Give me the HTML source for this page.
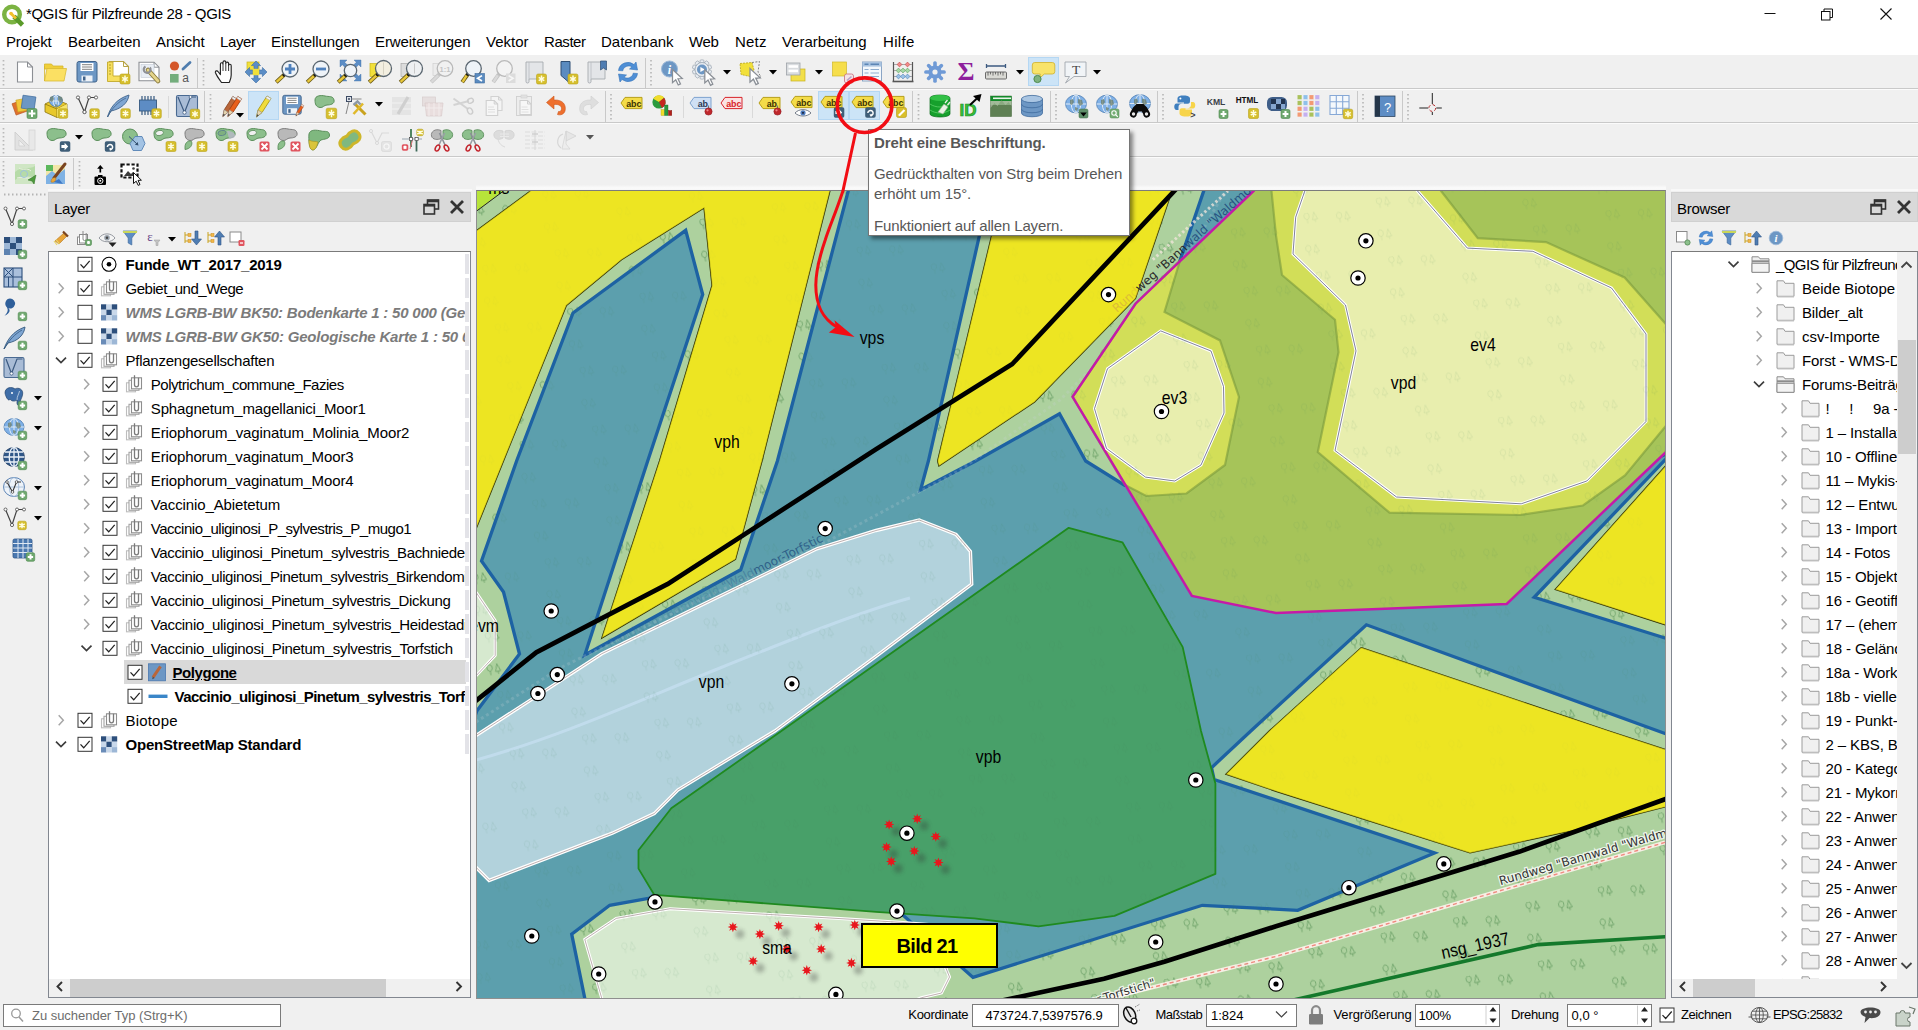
<!DOCTYPE html>
<html lang="de"><head><meta charset="utf-8"><title>QGIS für Pilzfreunde 28 - QGIS</title>
<style>
*{box-sizing:border-box;margin:0;padding:0}
html,body{width:1918px;height:1030px;overflow:hidden;background:#f0f0f0;font-family:"Liberation Sans",sans-serif;font-size:15px;color:#000}
.abs{position:absolute}
#title{left:0;top:0;width:1918px;height:30px;background:#fff}
#title .t{left:26px;top:5px;font-size:15px;white-space:nowrap}
#menu{left:0;top:30px;width:1918px;height:25px;background:#fff}
#menu span{position:absolute;top:3px;font-size:15px;white-space:nowrap}
.hl{background:#cce4f7;border:1px solid #b5d7f3}
.sep{background:#c9c9c9}
.panelhead{background:#d9d9d9;height:30px;font-size:15px;padding:7px 0 0 5px;border:1px solid #d0d0d0}
.tree{background:#fff;border:1px solid #828790;border-top-color:#7a7a7a;overflow:hidden}
.row{position:absolute;left:0;height:24px;line-height:26px;white-space:nowrap;font-size:15px}
.b{font-weight:bold}
.gi{font-weight:bold;font-style:italic;color:#7b7b7b}
.stat{position:absolute;top:1007px;font-size:13px;white-space:nowrap;line-height:16px}
.inp{position:absolute;background:#fff;border:1px solid #7a7a7a;height:23px;top:1004px;font-size:13px;line-height:21px;white-space:nowrap;overflow:hidden}
svg text{font-family:"DejaVu Sans","Liberation Sans",sans-serif}
</style></head><body>
<div id="title" class="abs"><span class="abs t" style="letter-spacing:-0.354px">*QGIS für Pilzfreunde 28 - QGIS</span></div>
<div id="menu" class="abs">
<span style="left:6px;letter-spacing:-0.155px">Projekt</span>
<span style="left:68px;letter-spacing:0.004px">Bearbeiten</span>
<span style="left:156px;letter-spacing:-0.084px">Ansicht</span>
<span style="left:220px;letter-spacing:-0.386px">Layer</span>
<span style="left:271px;letter-spacing:-0.113px">Einstellungen</span>
<span style="left:375px;letter-spacing:-0.087px">Erweiterungen</span>
<span style="left:486px;letter-spacing:0.011px">Vektor</span>
<span style="left:544px;letter-spacing:-0.431px">Raster</span>
<span style="left:601px;letter-spacing:0.004px">Datenbank</span>
<span style="left:689px;letter-spacing:-0.326px">Web</span>
<span style="left:735px;letter-spacing:0.189px">Netz</span>
<span style="left:782px;letter-spacing:-0.040px">Verarbeitung</span>
<span style="left:883px;letter-spacing:0.320px">Hilfe</span>
</div>
<div class="abs sep" style="left:0;top:88px;width:1918px;height:1px"></div>
<div class="abs sep" style="left:0;top:122px;width:1918px;height:1px"></div>
<div class="abs sep" style="left:0;top:156px;width:1918px;height:1px"></div>
<div class="abs" style="left:0;top:89px;width:1918px;height:1px;background:#fbfbfb"></div>
<div class="abs" style="left:0;top:123px;width:1918px;height:1px;background:#fbfbfb"></div>
<div class="abs" style="left:0;top:157px;width:1918px;height:1px;background:#fbfbfb"></div>
<div class="abs hl" style="left:1028px;top:57px;width:31px;height:29px"></div>
<div class="abs hl" style="left:248px;top:91px;width:31px;height:29px"></div>
<div class="abs hl" style="left:818px;top:91px;width:31px;height:29px"></div>
<div class="abs hl" style="left:849px;top:91px;width:31px;height:29px"></div>
<svg class="abs" style="left:476px;top:191px" width="1190" height="807" viewBox="476 191 1190 807">
<defs><filter id="sh" x="-50%" y="-50%" width="250%" height="250%"><feGaussianBlur stdDeviation="2.2"/></filter><g id="trp" fill="none" stroke-width="1"><path d="M-3,-1.500 a2.600,3.300 0 1,1 .1,0 M-3,-1.500 v4 M2.200,0 l2.600,-7.500 l2.600,7.500z M4.800,0 v2.800"/></g><pattern id="tr" width="74" height="60" patternUnits="userSpaceOnUse" patternTransform="rotate(-12)"><g stroke="#3c7a50" stroke-opacity=".09"><use href="#trp" x="10" y="14"/><use href="#trp" x="47" y="40"/><use href="#trp" x="52" y="8"/></g></pattern><pattern id="tr2" width="74" height="60" patternUnits="userSpaceOnUse" patternTransform="rotate(-12)"><g stroke="#6fa267" stroke-opacity=".75"><use href="#trp" x="10" y="14"/><use href="#trp" x="47" y="40"/><use href="#trp" x="52" y="8"/></g></pattern></defs>
<rect x="476" y="191" width="1190" height="807" fill="#add19e"/>
<rect x="476" y="191" width="1190" height="807" fill="url(#tr2)"/>
<path d="M1665,842.4 L1276,956.4 L1090,1003" stroke="#f6efe4" stroke-width="4" fill="none"/>
<path d="M1665,842.4 L1276,956.4 L1090,1003" stroke="#f08a80" stroke-width="1.4" stroke-dasharray="4,3" fill="none"/>
<polygon points="470.0,185.0 512.0,185.0 503.5,191.0 476.0,211.5 470.0,215.5" fill="#b7e43a" stroke="#222" stroke-width="1"/>
<polygon points="470.0,1005.0 470.0,730.0 476.8,711.0 519.5,654.0 503.5,592.0 481.5,561.0 516.6,461.0 573.0,313.0 685.7,230.3 702.7,294.5 647.7,461.0 584.8,655.0 740.7,569.8 777.4,461.0 848.2,191.0 850.0,183.0 992.0,183.0 989.5,191.0 928.4,461.0 920.6,489.8 975.6,461.0 1059.5,413.8 1085.7,461.0 1123.7,484.6 1150.0,400.0 1180.0,260.5 1203.7,191.0 1206.0,183.0 1262.0,183.0 1400.0,400.0 1600.0,480.0 1672.0,452.0 1665.0,460.0 1534.2,597.3 1665.0,638.0 1672.0,640.0 1672.0,736.0 1665.0,733.5 1366.4,624.8 1250.8,731.0 1211.5,767.7 1214.1,779.5 1434.6,852.9 1297.7,910.3 1202.3,905.3 973.0,977.4 902.2,914.5 896.0,906.0 656.0,891.0 654.2,897.4 609.7,905.3 571.7,934.1 584.8,998.4 586.5,1006.0" fill="#5c9fad" stroke="#1d62a3" stroke-width="3.3" stroke-linejoin="miter"/>
<path d="M476,722 L560,668 L700,600 L830,540 L960,470 L1060,400 L1130,330 L1200,235 L1225,191" stroke="#c9d3d6" stroke-opacity=".22" stroke-width="3" stroke-dasharray="3,3" fill="none"/>
<polygon points="470.0,235.5 476.0,231.0 529.7,191.5 540.0,183.0 832.0,183.0 829.9,191.0 762.0,461.0 735.5,559.3 601.8,638.0 659.5,461.0 712.0,285.4 704.0,208.0 621.5,259.7 566.4,305.5 503.5,461.0 476.0,529.0 470.0,543.0" fill="#ede522" stroke="#2a2a00" stroke-width="1.25"/>
<polygon points="1004.0,183.0 1002.0,191.0 991.3,236.9 937.6,461.0 938.9,466.0 1034.6,402.0 1135.5,298.5 1172.0,191.0 1175.0,183.0" fill="#ede522" stroke="#2a2a00" stroke-width="1.25"/>
<polygon points="1672.0,459.0 1665.3,466.2 1555.2,589.4 1665.3,624.8 1672.0,627.0" fill="#ede522" stroke="#2a2a00" stroke-width="1.25"/>
<polygon points="1361.2,647.6 1609.0,731.0 1665.0,749.3 1672.0,751.5 1672.0,805.0 1665.0,807.0 1572.2,830.6 1470.0,852.9 1276.0,791.3 1225.9,774.2 1269.2,731.0" fill="#ede522" stroke="#2a2a00" stroke-width="1.25"/>
<polygon points="1262.0,183.0 1253.5,191.0 1135.5,303.7 1072.6,396.8 1191.9,596.0 1276.0,613.0 1506.7,603.9 1665.0,453.0 1675.0,443.0 1675.0,183.0" fill="#a6c459"/>
<polygon points="1124.5,484.6 1072.6,396.8 1135.5,303.7 1180.0,260.5 1164.5,312.0 1220.0,340.4 1239.0,397.0 1225.0,465.0 1186.5,493.5 1146.3,496.0" fill="#d2de58" stroke="#7a9a3c" stroke-width="2.2" stroke-opacity=".6"/>
<polygon points="1270.0,183.0 1271.5,191.0 1276.0,235.6 1282.0,275.0 1335.0,319.7 1338.5,352.2 1317.8,452.0 1389.5,512.7 1520.0,515.0 1583.0,505.5 1625.0,475.5 1665.0,427.0 1672.0,418.0 1672.0,331.0 1664.0,322.0 1624.6,277.5 1546.0,242.1 1477.8,238.2 1441.1,191.0 1435.0,183.0" fill="#d2de58" stroke="#7a9a3c" stroke-width="2.2" stroke-opacity=".6"/>
<polygon points="1262.0,183.0 1253.5,191.0 1135.5,303.7 1072.6,396.8 1191.9,596.0 1276.0,613.0 1506.7,603.9 1665.0,453.0 1675.0,443.0 1675.0,183.0" fill="none" stroke="#c51aa8" stroke-width="2.5"/>
<polygon points="1160.7,330.9 1211.0,351.0 1223.5,386.5 1224.0,413.0 1201.0,465.0 1174.8,481.0 1145.5,477.1 1106.5,448.5 1094.5,408.6 1107.5,368.7" fill="#e8eeae" stroke="#fff" stroke-width="3"/>
<polygon points="1160.7,330.9 1211.0,351.0 1223.5,386.5 1224.0,413.0 1201.0,465.0 1174.8,481.0 1145.5,477.1 1106.5,448.5 1094.5,408.6 1107.5,368.7" fill="none" stroke="#4a4a70" stroke-width=".7"/>
<polygon points="1306.5,183.0 1304.8,191.0 1295.7,217.2 1293.0,253.9 1345.5,305.0 1356.0,350.9 1335.0,450.5 1396.5,497.0 1521.2,503.8 1586.8,481.0 1646.0,421.5 1646.0,334.0 1611.5,288.0 1532.9,251.3 1467.3,248.1 1417.5,191.0 1411.0,183.0" fill="#e8eeae" stroke="#fff" stroke-width="3"/>
<polygon points="1306.5,183.0 1304.8,191.0 1295.7,217.2 1293.0,253.9 1345.5,305.0 1356.0,350.9 1335.0,450.5 1396.5,497.0 1521.2,503.8 1586.8,481.0 1646.0,421.5 1646.0,334.0 1611.5,288.0 1532.9,251.3 1467.3,248.1 1417.5,191.0 1411.0,183.0" fill="none" stroke="#4a4a70" stroke-width=".7"/>
<polygon points="470.0,739.0 476.0,735.5 601.8,653.7 816.8,548.8 876.0,530.5 919.2,520.0 956.0,534.4 970.4,551.4 971.7,584.2 876.0,656.3 774.8,731.0 677.8,790.0 654.2,813.6 612.3,833.2 489.1,880.4 476.0,867.3 470.0,861.0" fill="#b2d2dc" stroke="#fff" stroke-width="3.4"/>
<polygon points="470.0,739.0 476.0,735.5 601.8,653.7 816.8,548.8 876.0,530.5 919.2,520.0 956.0,534.4 970.4,551.4 971.7,584.2 876.0,656.3 774.8,731.0 677.8,790.0 654.2,813.6 612.3,833.2 489.1,880.4 476.0,867.3 470.0,861.0" fill="none" stroke="#8a7070" stroke-width=".55"/>
<path d="M476,760 C560,737 640,700 720,668 S860,612 910,598" stroke="#c4def0" stroke-width="3" fill="none" opacity=".8"/>
<polygon points="1068.7,527.8 1122.4,542.3 1182.7,647.1 1201.0,731.0 1215.4,783.4 1215.4,873.9 1114.5,915.8 1038.5,926.3 974.3,918.4 876.0,911.9 654.2,894.8 638.5,868.6 638.5,850.3 671.3,808.3 781.4,731.0 876.0,664.1" fill="#48a069" stroke="#1f8a1f" stroke-width="1.8" stroke-linejoin="round"/>
<polygon points="670.0,908.7 840.0,918.6 900.0,922.3 962.0,927.0 945.5,967.0 949.5,977.0 941.5,993.0 921.3,997.8 900.0,1006.0 604.0,1006.0 601.8,998.4 584.8,939.4 616.2,918.4" fill="#d6e9cf" stroke="#fff" stroke-width="3"/>
<polygon points="670.0,908.7 840.0,918.6 900.0,922.3 962.0,927.0 945.5,967.0 949.5,977.0 941.5,993.0 921.3,997.8 900.0,1006.0 604.0,1006.0 601.8,998.4 584.8,939.4 616.2,918.4" fill="none" stroke="#8a7070" stroke-width=".55"/>
<polygon points="470.0,584.0 476.8,593.4 495.2,620.6 495.2,655.5 476.8,675.0 470.0,682.0" fill="#d6e9cf" stroke="#fff" stroke-width="3"/>
<polygon points="470.0,584.0 476.8,593.4 495.2,620.6 495.2,655.5 476.8,675.0 470.0,682.0" fill="none" stroke="#8a7070" stroke-width=".55"/>
<rect x="476" y="191" width="1190" height="807" fill="url(#tr)"/>
<polygon points="470.0,235.5 476.0,231.0 529.7,191.5 540.0,183.0 832.0,183.0 829.9,191.0 762.0,461.0 735.5,559.3 601.8,638.0 659.5,461.0 712.0,285.4 704.0,208.0 621.5,259.7 566.4,305.5 503.5,461.0 476.0,529.0 470.0,543.0" fill="#ede522" fill-opacity=".72"/>
<polygon points="1004.0,183.0 1002.0,191.0 991.3,236.9 937.6,461.0 938.9,466.0 1034.6,402.0 1135.5,298.5 1172.0,191.0 1175.0,183.0" fill="#ede522" fill-opacity=".72"/>
<polygon points="1672.0,459.0 1665.3,466.2 1555.2,589.4 1665.3,624.8 1672.0,627.0" fill="#ede522" fill-opacity=".72"/>
<polygon points="1361.2,647.6 1609.0,731.0 1665.0,749.3 1672.0,751.5 1672.0,805.0 1665.0,807.0 1572.2,830.6 1470.0,852.9 1276.0,791.3 1225.9,774.2 1269.2,731.0" fill="#ede522" fill-opacity=".72"/>
<text x="1622" y="861" font-size="12" fill="#333" stroke="#fff" stroke-width="2.5" paint-order="stroke" stroke-opacity=".8" text-anchor="middle" transform="rotate(-16.3 1583 857)">Rundweg "Bannwald "Waldmoor-Torfstich"</text>
<text x="1156" y="986" font-size="11.5" fill="#333" stroke="#fff" stroke-width="2.5" paint-order="stroke" stroke-opacity=".8" text-anchor="end" transform="rotate(-17 1156 986)">Rundweg "Bannwald "Waldmoor-Torfstich"</text>
<path d="M1152.8,259.7 L1191.2,224.5 L1228,191" stroke="#f3e6dc" stroke-width="3" stroke-dasharray="2.5,2.5" fill="none" opacity=".75"/>
<text x="1117" y="313" font-size="12" text-anchor="start" transform="rotate(-42 1117 313)"><tspan fill="#d8b23c" fill-opacity=".8">Run</tspan><tspan fill="#d8b23c" fill-opacity=".35">d</tspan><tspan fill="#2b2b2b">weg "Bann</tspan><tspan fill="#1f4a7c" fill-opacity=".9">wald "Waldmoor</tspan></text>
<text x="824" y="541" font-size="12" text-anchor="end" transform="rotate(-26.5 824 541)"><tspan fill="#2a5a8a" fill-opacity=".22">Rundweg "Bannwald </tspan><tspan fill="#2a5a8a" fill-opacity=".4">"Wald</tspan><tspan fill="#245080" fill-opacity=".8">moor-Torfstic</tspan></text>
<path d="M1178,187 L1012.3,364 L876,449.2 L667.4,584.2 L536.3,652.3 L470,705.5" fill="none" stroke="#000" stroke-width="4.7" stroke-linejoin="round"/>
<path d="M1672,796.5 L1665,799.2 L1519.8,851.6 L1276,926.3 L1164.3,961.7 L1104,978.7 L1000,1001" fill="none" stroke="#000" stroke-width="4.7" stroke-linejoin="round"/>
<path d="M1672,936.3 L1665,936.8 L1538.1,944.6 L1289,1001 L1270,1005" fill="none" stroke="#14792b" stroke-width="3.6"/>
<circle cx="739.9" cy="934.1" r="4.5" fill="#333" opacity=".32" filter="url(#sh)"/>
<circle cx="766.9" cy="941.1" r="4.5" fill="#333" opacity=".32" filter="url(#sh)"/>
<circle cx="785.7" cy="932.8" r="4.5" fill="#333" opacity=".32" filter="url(#sh)"/>
<circle cx="825.6" cy="934.1" r="4.5" fill="#333" opacity=".32" filter="url(#sh)"/>
<circle cx="861.8" cy="932.0" r="4.5" fill="#333" opacity=".32" filter="url(#sh)"/>
<circle cx="760.1" cy="968.1" r="4.5" fill="#333" opacity=".32" filter="url(#sh)"/>
<circle cx="828.2" cy="956.1" r="4.5" fill="#333" opacity=".32" filter="url(#sh)"/>
<circle cx="813.8" cy="977.3" r="4.5" fill="#333" opacity=".32" filter="url(#sh)"/>
<circle cx="858.4" cy="970.0" r="4.5" fill="#333" opacity=".32" filter="url(#sh)"/>
<circle cx="793.6" cy="956.1" r="4.5" fill="#333" opacity=".32" filter="url(#sh)"/>
<circle cx="896.1" cy="831.6" r="4.5" fill="#333" opacity=".32" filter="url(#sh)"/>
<circle cx="924.2" cy="825.8" r="4.5" fill="#333" opacity=".32" filter="url(#sh)"/>
<circle cx="942.8" cy="843.6" r="4.5" fill="#333" opacity=".32" filter="url(#sh)"/>
<circle cx="893.5" cy="854.1" r="4.5" fill="#333" opacity=".32" filter="url(#sh)"/>
<circle cx="921.3" cy="858.1" r="4.5" fill="#333" opacity=".32" filter="url(#sh)"/>
<circle cx="898.2" cy="868.5" r="4.5" fill="#333" opacity=".32" filter="url(#sh)"/>
<circle cx="945.4" cy="869.6" r="4.5" fill="#333" opacity=".32" filter="url(#sh)"/>
<polygon points="732.9,921.9 733.9,924.7 736.6,923.4 735.3,926.1 738.1,927.1 735.3,928.1 736.6,930.8 733.9,929.5 732.9,932.3 731.9,929.5 729.2,930.8 730.5,928.1 727.7,927.1 730.5,926.1 729.2,923.4 731.9,924.7" fill="#e8171d"/>
<polygon points="759.9,928.9 760.9,931.7 763.6,930.4 762.3,933.1 765.1,934.1 762.3,935.1 763.6,937.8 760.9,936.5 759.9,939.3 758.9,936.5 756.2,937.8 757.5,935.1 754.7,934.1 757.5,933.1 756.2,930.4 758.9,931.7" fill="#e8171d"/>
<polygon points="778.7,920.6 779.7,923.4 782.4,922.1 781.1,924.8 783.9,925.8 781.1,926.8 782.4,929.5 779.7,928.2 778.7,931.0 777.7,928.2 775.0,929.5 776.3,926.8 773.5,925.8 776.3,924.8 775.0,922.1 777.7,923.4" fill="#e8171d"/>
<polygon points="818.6,921.9 819.6,924.7 822.3,923.4 821.0,926.1 823.8,927.1 821.0,928.1 822.3,930.8 819.6,929.5 818.6,932.3 817.6,929.5 814.9,930.8 816.2,928.1 813.4,927.1 816.2,926.1 814.9,923.4 817.6,924.7" fill="#e8171d"/>
<polygon points="854.8,919.8 855.8,922.6 858.5,921.3 857.2,924.0 860.0,925.0 857.2,926.0 858.5,928.7 855.8,927.4 854.8,930.2 853.8,927.4 851.1,928.7 852.4,926.0 849.6,925.0 852.4,924.0 851.1,921.3 853.8,922.6" fill="#e8171d"/>
<polygon points="753.1,955.9 754.1,958.7 756.8,957.4 755.5,960.1 758.3,961.1 755.5,962.1 756.8,964.8 754.1,963.5 753.1,966.3 752.1,963.5 749.4,964.8 750.7,962.1 747.9,961.1 750.7,960.1 749.4,957.4 752.1,958.7" fill="#e8171d"/>
<polygon points="821.2,943.9 822.2,946.7 824.9,945.4 823.6,948.1 826.4,949.1 823.6,950.1 824.9,952.8 822.2,951.5 821.2,954.3 820.2,951.5 817.5,952.8 818.8,950.1 816.0,949.1 818.8,948.1 817.5,945.4 820.2,946.7" fill="#e8171d"/>
<polygon points="806.8,965.1 807.8,967.9 810.5,966.6 809.2,969.3 812.0,970.3 809.2,971.3 810.5,974.0 807.8,972.7 806.8,975.5 805.8,972.7 803.1,974.0 804.4,971.3 801.6,970.3 804.4,969.3 803.1,966.6 805.8,967.9" fill="#e8171d"/>
<polygon points="851.4,957.8 852.4,960.6 855.1,959.3 853.8,962.0 856.6,963.0 853.8,964.0 855.1,966.7 852.4,965.4 851.4,968.2 850.4,965.4 847.7,966.7 849.0,964.0 846.2,963.0 849.0,962.0 847.7,959.3 850.4,960.6" fill="#e8171d"/>
<polygon points="786.6,943.9 787.6,946.7 790.3,945.4 789.0,948.1 791.8,949.1 789.0,950.1 790.3,952.8 787.6,951.5 786.6,954.3 785.6,951.5 782.9,952.8 784.2,950.1 781.4,949.1 784.2,948.1 782.9,945.4 785.6,946.7" fill="#e8171d"/>
<polygon points="889.1,819.4 890.1,822.2 892.8,820.9 891.5,823.6 894.3,824.6 891.5,825.6 892.8,828.3 890.1,827.0 889.1,829.8 888.1,827.0 885.4,828.3 886.7,825.6 883.9,824.6 886.7,823.6 885.4,820.9 888.1,822.2" fill="#e8171d"/>
<polygon points="917.2,813.6 918.2,816.4 920.9,815.1 919.6,817.8 922.4,818.8 919.6,819.8 920.9,822.5 918.2,821.2 917.2,824.0 916.2,821.2 913.5,822.5 914.8,819.8 912.0,818.8 914.8,817.8 913.5,815.1 916.2,816.4" fill="#e8171d"/>
<polygon points="935.8,831.4 936.8,834.2 939.5,832.9 938.2,835.6 941.0,836.6 938.2,837.6 939.5,840.3 936.8,839.0 935.8,841.8 934.8,839.0 932.1,840.3 933.4,837.6 930.6,836.6 933.4,835.6 932.1,832.9 934.8,834.2" fill="#e8171d"/>
<polygon points="886.5,841.9 887.5,844.7 890.2,843.4 888.9,846.1 891.7,847.1 888.9,848.1 890.2,850.8 887.5,849.5 886.5,852.3 885.5,849.5 882.8,850.8 884.1,848.1 881.3,847.1 884.1,846.1 882.8,843.4 885.5,844.7" fill="#e8171d"/>
<polygon points="914.3,845.9 915.3,848.7 918.0,847.4 916.7,850.1 919.5,851.1 916.7,852.1 918.0,854.8 915.3,853.5 914.3,856.3 913.3,853.5 910.6,854.8 911.9,852.1 909.1,851.1 911.9,850.1 910.6,847.4 913.3,848.7" fill="#e8171d"/>
<polygon points="891.2,856.3 892.2,859.1 894.9,857.8 893.6,860.5 896.4,861.5 893.6,862.5 894.9,865.2 892.2,863.9 891.2,866.7 890.2,863.9 887.5,865.2 888.8,862.5 886.0,861.5 888.8,860.5 887.5,857.8 890.2,859.1" fill="#e8171d"/>
<polygon points="938.4,857.4 939.4,860.2 942.1,858.9 940.8,861.6 943.6,862.6 940.8,863.6 942.1,866.3 939.4,865.0 938.4,867.8 937.4,865.0 934.7,866.3 936.0,863.6 933.2,862.6 936.0,861.6 934.7,858.9 937.4,860.2" fill="#e8171d"/>
<circle cx="1108.5" cy="294.6" r="7.2" fill="#fff" stroke="#000" stroke-width="1.2"/><circle cx="1108.5" cy="294.6" r="2.6" fill="#000"/>
<circle cx="1365.9" cy="240.8" r="7.2" fill="#fff" stroke="#000" stroke-width="1.2"/><circle cx="1365.9" cy="240.8" r="2.6" fill="#000"/>
<circle cx="1358.0" cy="278.0" r="7.2" fill="#fff" stroke="#000" stroke-width="1.2"/><circle cx="1358.0" cy="278.0" r="2.6" fill="#000"/>
<circle cx="1161.5" cy="411.5" r="7.2" fill="#fff" stroke="#000" stroke-width="1.2"/><circle cx="1161.5" cy="411.5" r="2.6" fill="#000"/>
<circle cx="825.2" cy="528.6" r="7.2" fill="#fff" stroke="#000" stroke-width="1.2"/><circle cx="825.2" cy="528.6" r="2.6" fill="#000"/>
<circle cx="551.2" cy="611.0" r="7.2" fill="#fff" stroke="#000" stroke-width="1.2"/><circle cx="551.2" cy="611.0" r="2.6" fill="#000"/>
<circle cx="557.3" cy="674.6" r="7.2" fill="#fff" stroke="#000" stroke-width="1.2"/><circle cx="557.3" cy="674.6" r="2.6" fill="#000"/>
<circle cx="537.9" cy="693.5" r="7.2" fill="#fff" stroke="#000" stroke-width="1.2"/><circle cx="537.9" cy="693.5" r="2.6" fill="#000"/>
<circle cx="791.9" cy="683.8" r="7.2" fill="#fff" stroke="#000" stroke-width="1.2"/><circle cx="791.9" cy="683.8" r="2.6" fill="#000"/>
<circle cx="655.0" cy="901.9" r="7.2" fill="#fff" stroke="#000" stroke-width="1.2"/><circle cx="655.0" cy="901.9" r="2.6" fill="#000"/>
<circle cx="531.8" cy="936.0" r="7.2" fill="#fff" stroke="#000" stroke-width="1.2"/><circle cx="531.8" cy="936.0" r="2.6" fill="#000"/>
<circle cx="598.7" cy="974.0" r="7.2" fill="#fff" stroke="#000" stroke-width="1.2"/><circle cx="598.7" cy="974.0" r="2.6" fill="#000"/>
<circle cx="835.9" cy="994.4" r="7.2" fill="#fff" stroke="#000" stroke-width="1.2"/><circle cx="835.9" cy="994.4" r="2.6" fill="#000"/>
<circle cx="906.9" cy="833.2" r="7.2" fill="#fff" stroke="#000" stroke-width="1.2"/><circle cx="906.9" cy="833.2" r="2.6" fill="#000"/>
<circle cx="897.0" cy="911.1" r="7.2" fill="#fff" stroke="#000" stroke-width="1.2"/><circle cx="897.0" cy="911.1" r="2.6" fill="#000"/>
<circle cx="1195.8" cy="780.0" r="7.2" fill="#fff" stroke="#000" stroke-width="1.2"/><circle cx="1195.8" cy="780.0" r="2.6" fill="#000"/>
<circle cx="1155.7" cy="942.0" r="7.2" fill="#fff" stroke="#000" stroke-width="1.2"/><circle cx="1155.7" cy="942.0" r="2.6" fill="#000"/>
<circle cx="1276.0" cy="984.0" r="7.2" fill="#fff" stroke="#000" stroke-width="1.2"/><circle cx="1276.0" cy="984.0" r="2.6" fill="#000"/>
<circle cx="1443.8" cy="863.9" r="7.2" fill="#fff" stroke="#000" stroke-width="1.2"/><circle cx="1443.8" cy="863.9" r="2.6" fill="#000"/>
<circle cx="1348.9" cy="887.7" r="7.2" fill="#fff" stroke="#000" stroke-width="1.2"/><circle cx="1348.9" cy="887.7" r="2.6" fill="#000"/>
<text x="0" y="0" font-size="18" text-anchor="middle" transform="translate(727.0 447.5) scale(.875 1)" style="font-family:'Liberation Sans',sans-serif">vph</text>
<text x="0" y="0" font-size="18" text-anchor="middle" transform="translate(872.0 344.0) scale(.875 1)" style="font-family:'Liberation Sans',sans-serif">vps</text>
<text x="0" y="0" font-size="18" text-anchor="middle" transform="translate(1174.5 403.5) scale(.875 1)" style="font-family:'Liberation Sans',sans-serif">ev3</text>
<text x="0" y="0" font-size="18" text-anchor="middle" transform="translate(1483.0 351.0) scale(.875 1)" style="font-family:'Liberation Sans',sans-serif">ev4</text>
<text x="0" y="0" font-size="18" text-anchor="middle" transform="translate(1403.5 389.0) scale(.875 1)" style="font-family:'Liberation Sans',sans-serif">vpd</text>
<text x="0" y="0" font-size="18" text-anchor="middle" transform="translate(711.5 688.0) scale(.875 1)" style="font-family:'Liberation Sans',sans-serif">vpn</text>
<text x="0" y="0" font-size="18" text-anchor="middle" transform="translate(988.5 763.0) scale(.875 1)" style="font-family:'Liberation Sans',sans-serif">vpb</text>
<text x="0" y="0" font-size="18" text-anchor="middle" transform="translate(777.0 953.5) scale(.875 1)" style="font-family:'Liberation Sans',sans-serif">sma</text>
<text x="0" y="0" font-size="18" text-anchor="middle" transform="translate(484.0 632.0) scale(.875 1)" style="font-family:'Liberation Sans',sans-serif">evm</text>
<text x="0" y="0" font-size="18" text-anchor="middle" transform="translate(498.8 193.8) scale(.875 1)" style="font-family:'Liberation Sans',sans-serif">ms</text>
<text x="0" y="0" font-size="18" text-anchor="middle" transform="translate(1476.5 951.5) rotate(-12.5) scale(.875 1)" style="font-family:'Liberation Sans',sans-serif">nsg_1937</text>
</svg>
<div class="abs" style="left:476px;top:185px;width:1190px;height:5px;background:linear-gradient(#f1f1f1,#fbfbfb 60%,#f6f6f6)"></div>
<div class="abs" style="left:48px;top:189px;width:424px;height:2px;background:#f8f8f8"></div>
<div class="abs" style="left:1671px;top:189px;width:247px;height:2px;background:#f8f8f8"></div>
<div class="abs" style="left:476px;top:190px;width:1190px;height:809px;border:1px solid #8f8f8f;border-top-color:#7c7c7c"></div>
<div class="abs panelhead" style="left:48px;top:192px;width:423px;letter-spacing:-.3px">Layer</div>
<div class="abs tree" id="ltree" style="left:48px;top:251px;width:423px;height:747px">
<div class="abs" style="left:75px;top:408px;width:342px;height:24px;background:#d9d9d9"></div>
<div class="abs" style="left:0;top:0;width:416px;height:727px;overflow:hidden">
<div class="row b" style="left:76.5px;top:0px;letter-spacing:-0.220px;">Funde_WT_2017_2019</div>
<div class="row" style="left:76.5px;top:24px;letter-spacing:-0.476px;">Gebiet_und_Wege</div>
<div class="row gi" style="left:76.5px;top:48px;letter-spacing:-0.205px;">WMS LGRB-BW BK50: Bodenkarte 1 : 50 000 (GeoLa BK50)</div>
<div class="row gi" style="left:76.5px;top:72px;letter-spacing:-0.201px;">WMS LGRB-BW GK50: Geologische Karte 1 : 50 000 (GeoLa GK50)</div>
<div class="row" style="left:76.5px;top:96px;letter-spacing:-0.249px;">Pflanzengesellschaften</div>
<div class="row" style="left:101.8px;top:120px;letter-spacing:-0.465px;">Polytrichum_commune_Fazies</div>
<div class="row" style="left:101.8px;top:144px;letter-spacing:-0.158px;">Sphagnetum_magellanici_Moor1</div>
<div class="row" style="left:101.8px;top:168px;letter-spacing:-0.095px;">Eriophorum_vaginatum_Molinia_Moor2</div>
<div class="row" style="left:101.8px;top:192px;letter-spacing:-0.126px;">Eriophorum_vaginatum_Moor3</div>
<div class="row" style="left:101.8px;top:216px;letter-spacing:-0.126px;">Eriophorum_vaginatum_Moor4</div>
<div class="row" style="left:101.8px;top:240px;letter-spacing:-0.120px;">Vaccinio_Abietetum</div>
<div class="row" style="left:101.8px;top:264px;letter-spacing:-0.478px;">Vaccinio_uliginosi_P_sylvestris_P_mugo1</div>
<div class="row" style="left:101.8px;top:288px;letter-spacing:-0.358px;">Vaccinio_uliginosi_Pinetum_sylvestris_Bachniederung</div>
<div class="row" style="left:101.8px;top:312px;letter-spacing:-0.384px;">Vaccinio_uliginosi_Pinetum_sylvestris_Birkendominanz</div>
<div class="row" style="left:101.8px;top:336px;letter-spacing:-0.318px;">Vaccinio_uliginosi_Pinetum_sylvestris_Dickung</div>
<div class="row" style="left:101.8px;top:360px;letter-spacing:-0.300px;">Vaccinio_uliginosi_Pinetum_sylvestris_Heidestadium</div>
<div class="row" style="left:101.8px;top:384px;letter-spacing:-0.292px;">Vaccinio_uliginosi_Pinetum_sylvestris_Torfstich</div>
<div class="row b" style="left:123.5px;top:408px;letter-spacing:-0.436px;text-decoration:underline;">Polygone</div>
<div class="row b" style="left:125.5px;top:432px;letter-spacing:-0.526px;">Vaccinio_uliginosi_Pinetum_sylvestris_Torfstich</div>
<div class="row" style="left:76.5px;top:456px;letter-spacing:0.189px;">Biotope</div>
<div class="row b" style="left:76.5px;top:480px;letter-spacing:-0.197px;">OpenStreetMap Standard</div>
</div>
<div class="abs" style="left:416px;top:2px;width:4px;height:20px;background:#e3e3e8"></div>
<div class="abs" style="left:416px;top:26px;width:4px;height:20px;background:#e3e3e8"></div>
<div class="abs" style="left:416px;top:50px;width:4px;height:20px;background:#e3e3e8"></div>
<div class="abs" style="left:416px;top:74px;width:4px;height:20px;background:#e3e3e8"></div>
<div class="abs" style="left:416px;top:98px;width:4px;height:20px;background:#e3e3e8"></div>
<div class="abs" style="left:416px;top:122px;width:4px;height:20px;background:#e3e3e8"></div>
<div class="abs" style="left:416px;top:146px;width:4px;height:20px;background:#e3e3e8"></div>
<div class="abs" style="left:416px;top:170px;width:4px;height:20px;background:#e3e3e8"></div>
<div class="abs" style="left:416px;top:194px;width:4px;height:20px;background:#e3e3e8"></div>
<div class="abs" style="left:416px;top:218px;width:4px;height:20px;background:#e3e3e8"></div>
<div class="abs" style="left:416px;top:242px;width:4px;height:20px;background:#e3e3e8"></div>
<div class="abs" style="left:416px;top:266px;width:4px;height:20px;background:#e3e3e8"></div>
<div class="abs" style="left:416px;top:290px;width:4px;height:20px;background:#e3e3e8"></div>
<div class="abs" style="left:416px;top:314px;width:4px;height:20px;background:#e3e3e8"></div>
<div class="abs" style="left:416px;top:338px;width:4px;height:20px;background:#e3e3e8"></div>
<div class="abs" style="left:416px;top:362px;width:4px;height:20px;background:#e3e3e8"></div>
<div class="abs" style="left:416px;top:386px;width:4px;height:20px;background:#e3e3e8"></div>
<div class="abs" style="left:416px;top:410px;width:4px;height:20px;background:#e3e3e8"></div>
<div class="abs" style="left:416px;top:434px;width:4px;height:20px;background:#e3e3e8"></div>
<div class="abs" style="left:416px;top:458px;width:4px;height:20px;background:#e3e3e8"></div>
<div class="abs" style="left:416px;top:482px;width:4px;height:20px;background:#e3e3e8"></div>
<div class="abs" style="left:0;top:727px;width:421px;height:18px;background:#f0f0f0"></div>
<div class="abs" style="left:21px;top:727px;width:316px;height:18px;background:#cdcdcd"></div>
</div>
<div class="abs panelhead" style="left:1671px;top:192px;width:247px;letter-spacing:-.3px">Browser</div>
<div class="abs tree" id="btree" style="left:1671px;top:251px;width:247px;height:747px">
<div class="abs" style="left:0;top:0;width:225px;height:727px;overflow:hidden">
<div class="row" style="left:104.0px;top:0px;letter-spacing:-0.583px">_QGIS für Pilzfreunde</div>
<div class="row" style="left:130.0px;top:24px;letter-spacing:-0.031px">Beide Biotope</div>
<div class="row" style="left:130.0px;top:48px;letter-spacing:-0.173px">Bilder_alt</div>
<div class="row" style="left:130.0px;top:72px;letter-spacing:-0.061px">csv-Importe</div>
<div class="row" style="left:130.0px;top:96px;letter-spacing:-0.120px">Forst - WMS-Dienste</div>
<div class="row" style="left:130.0px;top:120px;letter-spacing:-0.120px">Forums-Beiträge</div>
<div class="row" style="left:153.5px;top:144px;letter-spacing:-0.120px">!  !  9a - Nachtrag</div>
<div class="row" style="left:153.5px;top:168px;letter-spacing:-0.120px">1 – Installation</div>
<div class="row" style="left:153.5px;top:192px;letter-spacing:-0.120px">10 - Offline-Karten</div>
<div class="row" style="left:153.5px;top:216px;letter-spacing:-0.120px">11 – Mykis-Import</div>
<div class="row" style="left:153.5px;top:240px;letter-spacing:-0.120px">12 – Entwurf</div>
<div class="row" style="left:153.5px;top:264px;letter-spacing:-0.120px">13 - Import von Daten</div>
<div class="row" style="left:153.5px;top:288px;letter-spacing:-0.305px">14 - Fotos</div>
<div class="row" style="left:153.5px;top:312px;letter-spacing:-0.120px">15 - Objekte</div>
<div class="row" style="left:153.5px;top:336px;letter-spacing:-0.120px">16 - Geotiff</div>
<div class="row" style="left:153.5px;top:360px;letter-spacing:-0.120px">17 – (ehemals)</div>
<div class="row" style="left:153.5px;top:384px;letter-spacing:-0.120px">18 - Gelände</div>
<div class="row" style="left:153.5px;top:408px;letter-spacing:-0.120px">18a - Workshop</div>
<div class="row" style="left:153.5px;top:432px;letter-spacing:-0.120px">18b - vielleicht</div>
<div class="row" style="left:153.5px;top:456px;letter-spacing:-0.120px">19 - Punkt-Layer</div>
<div class="row" style="left:153.5px;top:480px;letter-spacing:-0.120px">2 – KBS, Basiskarten</div>
<div class="row" style="left:153.5px;top:504px;letter-spacing:-0.120px">20 - Kategorien</div>
<div class="row" style="left:153.5px;top:528px;letter-spacing:-0.120px">21 - Mykorrhiza</div>
<div class="row" style="left:153.5px;top:552px;letter-spacing:-0.120px">22 - Anwendung</div>
<div class="row" style="left:153.5px;top:576px;letter-spacing:-0.120px">23 - Anwendung</div>
<div class="row" style="left:153.5px;top:600px;letter-spacing:-0.120px">24 - Anwendung</div>
<div class="row" style="left:153.5px;top:624px;letter-spacing:-0.120px">25 - Anwendung</div>
<div class="row" style="left:153.5px;top:648px;letter-spacing:-0.120px">26 - Anwendung</div>
<div class="row" style="left:153.5px;top:672px;letter-spacing:-0.120px">27 - Anwendung</div>
<div class="row" style="left:153.5px;top:696px;letter-spacing:-0.120px">28 - Anwendung</div>
<div class="row" style="left:153.5px;top:720px;letter-spacing:-0.120px">29 - Anwendung</div>
</div>
<div class="abs" style="left:225px;top:0;width:20px;height:727px;background:#f0f0f0"></div>
<div class="abs" style="left:226px;top:88px;width:18px;height:114px;background:#cdcdcd"></div>
<div class="abs" style="left:0;top:727px;width:245px;height:18px;background:#f0f0f0"></div>
<div class="abs" style="left:21px;top:727px;width:62px;height:18px;background:#cdcdcd"></div>
</div>
<div class="inp" style="left:3.0px;width:278.0px;letter-spacing:-0.029px;padding-left:28.0px;color:#6d6d6d;">Zu suchender Typ (Strg+K)</div>
<div class="stat" style="left:908.3px;letter-spacing:-0.291px">Koordinate</div>
<div class="inp" style="left:972.0px;width:146.5px;letter-spacing:-0.125px;padding-left:12.5px;">473724.7,5397576.9</div>
<div class="stat" style="left:1155.5px;letter-spacing:-0.554px">Maßstab</div>
<div class="inp" style="left:1206.0px;width:90.5px;letter-spacing:-0.029px;padding-left:4.0px;">1:824</div>
<div class="stat" style="left:1333.5px;letter-spacing:-0.126px">Vergrößerung</div>
<div class="inp" style="left:1414.5px;width:85.5px;letter-spacing:-0.191px;padding-left:3.0px;">100%</div>
<div class="stat" style="left:1511.0px;letter-spacing:-0.327px">Drehung</div>
<div class="inp" style="left:1567.0px;width:84.5px;letter-spacing:0.022px;padding-left:3.5px;">0,0 °</div>
<div class="stat" style="left:1681.0px;letter-spacing:-0.400px">Zeichnen</div>
<div class="stat" style="left:1773.0px;letter-spacing:-0.671px">EPSG:25832</div>
<svg class="abs" style="left:0;top:0;pointer-events:none" width="1918" height="1030" viewBox="0 0 1918 1030">
<defs><clipPath id="lclip"><rect x="52" y="252" width="413" height="727"/></clipPath><clipPath id="bclip"><rect x="1672" y="252" width="225" height="727"/></clipPath></defs>
<g transform="translate(12,14.500)"><circle r="7.800" fill="none" stroke="#7bb342" stroke-width="4.400"/><path d="M2,2 L10.500,10.500" stroke="#5a9a2a" stroke-width="4.600"/><path d="M-1,-1 L4,4" stroke="#f2c12e" stroke-width="3"/><circle cx="-1" cy="-1" r="1.800" fill="#f2c12e"/></g>
<path d="M1764.500,13.500 h11" stroke="#111" stroke-width="1"/><rect x="1821.500" y="11.500" width="8.500" height="8.500" fill="#fff" stroke="#111" stroke-width="1"/><path d="M1824,11.500 v-2.500 h8.500 v8.500 h-2.500" fill="none" stroke="#111" stroke-width="1"/><path d="M1880.500,8.500 l11,11 M1891.500,8.500 l-11,11" stroke="#111" stroke-width="1.100"/>
<path d="M3.5,60.0 V86.0" stroke="#b9b9b9" stroke-width="1.700" stroke-dasharray="1.600,2.400" fill="none"/>
<path d="M203.5,60.0 V86.0" stroke="#b9b9b9" stroke-width="1.700" stroke-dasharray="1.600,2.400" fill="none"/>
<path d="M651.0,60.0 V86.0" stroke="#b9b9b9" stroke-width="1.700" stroke-dasharray="1.600,2.400" fill="none"/>
<path d="M3.5,94.0 V120.0" stroke="#b9b9b9" stroke-width="1.700" stroke-dasharray="1.600,2.400" fill="none"/>
<path d="M210.5,94.0 V120.0" stroke="#b9b9b9" stroke-width="1.700" stroke-dasharray="1.600,2.400" fill="none"/>
<path d="M611.0,94.0 V120.0" stroke="#b9b9b9" stroke-width="1.700" stroke-dasharray="1.600,2.400" fill="none"/>
<path d="M918.5,94.0 V120.0" stroke="#b9b9b9" stroke-width="1.700" stroke-dasharray="1.600,2.400" fill="none"/>
<path d="M1056.0,94.0 V120.0" stroke="#b9b9b9" stroke-width="1.700" stroke-dasharray="1.600,2.400" fill="none"/>
<path d="M1163.0,94.0 V120.0" stroke="#b9b9b9" stroke-width="1.700" stroke-dasharray="1.600,2.400" fill="none"/>
<path d="M1363.0,94.0 V120.0" stroke="#b9b9b9" stroke-width="1.700" stroke-dasharray="1.600,2.400" fill="none"/>
<path d="M1408.0,94.0 V120.0" stroke="#b9b9b9" stroke-width="1.700" stroke-dasharray="1.600,2.400" fill="none"/>
<path d="M3.5,128.0 V154.0" stroke="#b9b9b9" stroke-width="1.700" stroke-dasharray="1.600,2.400" fill="none"/>
<path d="M3.5,161.0 V187.0" stroke="#b9b9b9" stroke-width="1.700" stroke-dasharray="1.600,2.400" fill="none"/>
<path d="M79.5,161.0 V187.0" stroke="#b9b9b9" stroke-width="1.700" stroke-dasharray="1.600,2.400" fill="none"/>
<path d="M197.5,58.0 V88.0" stroke="#c9c9c9" stroke-width="1" fill="none"/>
<path d="M645.5,58.0 V88.0" stroke="#c9c9c9" stroke-width="1" fill="none"/>
<path d="M204.5,91.0 V122.0" stroke="#c9c9c9" stroke-width="1" fill="none"/>
<path d="M605.5,91.0 V122.0" stroke="#c9c9c9" stroke-width="1" fill="none"/>
<path d="M912.5,91.0 V122.0" stroke="#c9c9c9" stroke-width="1" fill="none"/>
<path d="M1050.5,91.0 V122.0" stroke="#c9c9c9" stroke-width="1" fill="none"/>
<path d="M1157.5,91.0 V122.0" stroke="#c9c9c9" stroke-width="1" fill="none"/>
<path d="M1357.5,91.0 V122.0" stroke="#c9c9c9" stroke-width="1" fill="none"/>
<path d="M1402.5,91.0 V122.0" stroke="#c9c9c9" stroke-width="1" fill="none"/>
<path d="M73.5,158.0 V190.0" stroke="#c9c9c9" stroke-width="1" fill="none"/>
<path d="M168.5,96.0 V118.0" stroke="#d9d9d9" stroke-width="1" fill="none"/>
<path d="M683.5,96.0 V118.0" stroke="#d9d9d9" stroke-width="1" fill="none"/>
<path d="M752.5,96.0 V118.0" stroke="#d9d9d9" stroke-width="1" fill="none"/>
<path d="M4,194.500 h42" stroke="#b4b4b4" stroke-width="2" stroke-dasharray="1.5,2.5"/>
<g transform="translate(25.0,72.0)"><path d="M-7.5,-10.0 h10.0 l5.0,5.0 v15.0 h-15.0z" fill="#fff" stroke="#8c8f94" stroke-width="1.1"/><path d="M2.5,-10.0 v5.0 h5.0" fill="none" stroke="#8c8f94" stroke-width="1"/></g><g transform="translate(55.0,72.0)"><path d="M-10.5,-8 h7 l1.5,2 h10 v3 h-18.5z" fill="#f0cf3a" stroke="#d4b52c" stroke-width=".8"/><path d="M-10.5,9 L-8,-3.5 H11.5 L9,9z" fill="#fbe063" stroke="#d9bb36" stroke-width=".8"/><path d="M-10.5,9 V-6" stroke="#d4b52c" stroke-width=".8"/></g><g transform="translate(87.0,72.0)"><g transform="translate(0.0,0.0) scale(1.00)"><rect x="-10" y="-10.5" width="20" height="20.5" rx="2" fill="#6d97c4" stroke="#41648c" stroke-width="1"/><rect x="-6.5" y="-9" width="13" height="8" fill="#fff"/><path d="M-5,-7.300 h10 M-5,-5 h10 M-5,-2.700 h10" stroke="#555" stroke-width=".75"/><rect x="-5.5" y="3.5" width="11" height="6" fill="#eef2f7"/><rect x="-4" y="4.5" width="2.5" height="4" fill="#41648c"/></g></g><g transform="translate(118.0,72.0)"><path d="M-8.5,-10.5 h14.0 l5.0,5.0 v14.0 h-19.0z" fill="#fff" stroke="#b7a445" stroke-width="1.1"/><path d="M5.5,-10.5 v5.0 h5.0" fill="none" stroke="#b7a445" stroke-width="1"/><path d="M-10.5,-10 h5.5 v14 h10 v5.5 h-15.5z" fill="#f7df5f" stroke="#c2a92c" stroke-width=".9"/><path d="M-9,-7 h2 M-9,-4 h2 M-9,-1 h2 M-9,2 h2" stroke="#a08a1c" stroke-width=".8"/><rect x="2.0" y="2.0" width="10.0" height="10.0" rx="1.6" fill="#d6bf2d" stroke="#b8a21c" stroke-width=".6"/><path d="M7.0,3.5 v7.0 M4.2,5.3 l5.6,3.4 M4.2,8.7 l5.6,-3.4" stroke="#fffde0" stroke-width="1.5" fill="none"/></g><g transform="translate(149.0,72.0)"><path d="M-10.0,-9.8 h15.0 l5.0,5.0 v13.5 h-20.0z" fill="#fff" stroke="#8c8f94" stroke-width="1.1"/><path d="M5.0,-9.8 v5.0 h5.0" fill="none" stroke="#8c8f94" stroke-width="1"/><rect x="-8" y="-7.5" width="13" height="13" fill="#e9eef5" stroke="#c3cbd6" stroke-width=".6"/><path d="M-1,-2 L9,9" stroke="#8a7a3c" stroke-width="4.6" stroke-linecap="round"/><path d="M-1,-2 L9,9" stroke="#e4d48a" stroke-width="2.8" stroke-linecap="round"/><path d="M-3.5,-5.5 a3.4,3.4 0 1,0 4.4,1" fill="none" stroke="#8e9096" stroke-width="2.2"/></g><g transform="translate(180.0,72.0)"><circle cx="-5.5" cy="-6" r="4.6" fill="#d4572a"/><path d="M3,-3 L10,-9.5" stroke="#4f7dae" stroke-width="2.8" stroke-linecap="round"/><rect x="-10" y="2" width="8.6" height="8.6" fill="#73ad7c"/><text x="5.5" y="10" font-size="12" fill="#555" text-anchor="middle" style="font-family:'Liberation Sans',sans-serif">a</text></g><g transform="translate(225.0,72.0)"><path d="M-3.5,10.5 C-6,7 -9,2.5 -9.6,0.5 C-10,-1.2 -7.8,-1.8 -6.6,0 L-4.6,2.6 L-4.6,-7.8 C-4.6,-9.8 -2,-9.8 -2,-7.8 V-9.6 C-2,-11.6 .8,-11.6 .8,-9.6 V-8.6 C.8,-10.4 3.6,-10.4 3.6,-8.4 V-6.6 C3.6,-8.2 6.2,-8.2 6.2,-6.2 V3 C6.2,6.5 5,8.5 4.2,10.5z" fill="#fff" stroke="#222" stroke-width="1.15" stroke-linejoin="round"/><path d="M-2,-7.5 V-1 M.8,-8.5 V-1 M3.6,-6.5 V-1" stroke="#222" stroke-width=".9"/></g><g transform="translate(256.0,72.0)"><rect x="-9" y="-10" width="12" height="12" fill="#f2e03a" stroke="#c9b51e" stroke-width=".7"/><path transform="rotate(0)" d="M0,-11 l4.6,4.6 h-2.6 v3.2 h-4 v-3.2 h-2.6z" fill="#5b8dc6" stroke="#3d6ea8" stroke-width=".6"/><path transform="rotate(90)" d="M0,-11 l4.6,4.6 h-2.6 v3.2 h-4 v-3.2 h-2.6z" fill="#5b8dc6" stroke="#3d6ea8" stroke-width=".6"/><path transform="rotate(180)" d="M0,-11 l4.6,4.6 h-2.6 v3.2 h-4 v-3.2 h-2.6z" fill="#5b8dc6" stroke="#3d6ea8" stroke-width=".6"/><path transform="rotate(270)" d="M0,-11 l4.6,4.6 h-2.6 v3.2 h-4 v-3.2 h-2.6z" fill="#5b8dc6" stroke="#3d6ea8" stroke-width=".6"/><rect x="-3.2" y="-3.2" width="6.4" height="6.4" fill="#f2e03a"/></g><g transform="translate(287.0,72.0)"><path d="M-2.8,2.8 L-10.8,10.2" stroke="#6b5a14" stroke-width="4" stroke-linecap="butt"/><path d="M-4.0,4.0 L-10.4,9.8" stroke="#e8c83c" stroke-width="2.4"/><circle cx="-3.0" cy="3.0" r="1.5" fill="#111"/><circle cx="3.0" cy="-3.0" r="8.0" fill="#eef3f8" stroke="#5a6670" stroke-width="1.3"/><path d="M3,-8 v10 M-2,-3 h10" stroke="#4f81bd" stroke-width="2.8"/></g><g transform="translate(318.0,72.0)"><path d="M-2.8,2.8 L-10.8,10.2" stroke="#6b5a14" stroke-width="4" stroke-linecap="butt"/><path d="M-4.0,4.0 L-10.4,9.8" stroke="#e8c83c" stroke-width="2.4"/><circle cx="-3.0" cy="3.0" r="1.5" fill="#111"/><circle cx="3.0" cy="-3.0" r="8.0" fill="#eef3f8" stroke="#5a6670" stroke-width="1.3"/><path d="M-2,-3 h10" stroke="#4f81bd" stroke-width="2.8"/></g><g transform="translate(349.0,72.0)"><path transform="translate(1.5,-1.5) rotate(0)" d="M3.5,-10.500 h7 v7 l-2.300,-2.300 l-3,3 l-2.400,-2.400 l3,-3z" fill="#5b8dc6" stroke="#3d6ea8" stroke-width=".4"/><path transform="translate(1.5,-1.5) rotate(90)" d="M3.5,-10.500 h7 v7 l-2.300,-2.300 l-3,3 l-2.400,-2.400 l3,-3z" fill="#5b8dc6" stroke="#3d6ea8" stroke-width=".4"/><path transform="translate(1.5,-1.5) rotate(180)" d="M3.5,-10.500 h7 v7 l-2.300,-2.300 l-3,3 l-2.400,-2.400 l3,-3z" fill="#5b8dc6" stroke="#3d6ea8" stroke-width=".4"/><path transform="translate(1.5,-1.5) rotate(270)" d="M3.5,-10.500 h7 v7 l-2.300,-2.300 l-3,3 l-2.400,-2.400 l3,-3z" fill="#5b8dc6" stroke="#3d6ea8" stroke-width=".4"/><path d="M-3.0,3.0 L-10.8,10.2" stroke="#6b5a14" stroke-width="4" stroke-linecap="butt"/><path d="M-4.2,4.2 L-10.4,9.8" stroke="#e8c83c" stroke-width="2.4"/><circle cx="-3.2" cy="3.2" r="1.5" fill="#111"/><circle cx="1.5" cy="-1.5" r="6.2" fill="#eef3f8" stroke="#5a6670" stroke-width="1.3"/></g><g transform="translate(380.0,72.0)"><rect x="-10" y="-8.5" width="11" height="13" fill="#f2e03a" stroke="#c9b51e" stroke-width=".7"/><path d="M-2.3,2.3 L-10.8,10.2" stroke="#6b5a14" stroke-width="4" stroke-linecap="butt"/><path d="M-3.5,3.5 L-10.4,9.8" stroke="#e8c83c" stroke-width="2.4"/><circle cx="-2.5" cy="2.5" r="1.5" fill="#111"/><circle cx="3.5" cy="-3.5" r="8.0" fill="#f3efe0" stroke="#5a6670" stroke-width="1.3"/><path d="M3.5,-9.5 v12" stroke="#d6d2c2" stroke-width="1"/></g><g transform="translate(411.0,72.0)"><rect x="-10" y="-8.5" width="11" height="13" fill="#dcdcdc" stroke="#a9a9a9" stroke-width=".7"/><path d="M-2.3,2.3 L-10.8,10.2" stroke="#6b5a14" stroke-width="4" stroke-linecap="butt"/><path d="M-3.5,3.5 L-10.4,9.8" stroke="#e8c83c" stroke-width="2.4"/><circle cx="-2.5" cy="2.5" r="1.5" fill="#111"/><circle cx="3.5" cy="-3.5" r="8.0" fill="#eef0f2" stroke="#5a6670" stroke-width="1.3"/><path d="M3.5,-8.5 v10" stroke="#c9c9c9" stroke-width="1"/></g><g transform="translate(442.0,72.0)"><rect x="-9" y="-8.5" width="10" height="12" fill="#ececec" stroke="#d0d0d0" stroke-width=".7"/><path d="M-2.6,2.1 L-10.8,10.2" stroke="#c4c4c4" stroke-width="4" stroke-linecap="butt"/><path d="M-3.8,3.3 L-10.4,9.8" stroke="#d9d9d9" stroke-width="2.4"/><circle cx="3.0" cy="-3.5" r="7.8" fill="#f1f1f1" stroke="#b9b9b9" stroke-width="1.3"/><text x="3" y="-.3" font-size="7.5" font-weight="bold" fill="#c4c4c4" text-anchor="middle" style="font-family:'Liberation Sans',sans-serif">1:1</text></g><g transform="translate(473.0,72.0)"><path d="M-5.1,2.1 L-10.8,10.2" stroke="#6b5a14" stroke-width="4" stroke-linecap="butt"/><path d="M-6.3,3.3 L-10.4,9.8" stroke="#e8c83c" stroke-width="2.4"/><circle cx="-5.3" cy="2.3" r="1.5" fill="#111"/><circle cx="0.5" cy="-3.5" r="7.8" fill="#eef3f8" stroke="#5a6670" stroke-width="1.3"/><rect x="2" y="1.5" width="9.5" height="9.5" fill="#5a8bc0" stroke="#3f6b9d" stroke-width=".6"/><path d="M9,3.6 L4.6,6.3 L9,9" stroke="#fff" stroke-width="1.7" fill="none"/></g><g transform="translate(504.0,72.0)"><path d="M-5.1,2.1 L-10.8,10.2" stroke="#c4c4c4" stroke-width="4" stroke-linecap="butt"/><path d="M-6.3,3.3 L-10.4,9.8" stroke="#d9d9d9" stroke-width="2.4"/><circle cx="0.5" cy="-3.5" r="7.8" fill="#f3f3f3" stroke="#b9b9b9" stroke-width="1.3"/><rect x="2" y="1.5" width="9.5" height="9.5" fill="#dcdcdc"/><path d="M4.6,3.6 L9,6.3 L4.6,9" stroke="#f6f6f6" stroke-width="1.7" fill="none"/></g><g transform="translate(535.0,72.0)"><path d="M-9,-10 h17 v17 h-14 v2.5 a1.5,1.5 0 0,1 -3,0z" fill="#e3e5e8" stroke="#a6aaaf" stroke-width=".9"/><path d="M-6,-10 v17" stroke="#b9bdc2" stroke-width=".8"/><rect x="1.5" y="2.0" width="10.0" height="10.0" rx="1.6" fill="#d6bf2d" stroke="#b8a21c" stroke-width=".6"/><path d="M6.5,3.5 v7.0 M3.7,5.3 l5.6,3.4 M3.7,8.7 l5.6,-3.4" stroke="#fffde0" stroke-width="1.5" fill="none"/></g><g transform="translate(567.0,72.0)"><path d="M-6,-10.5 h9 v18 l-2,2 l-7,-6z" fill="#5a8bc0" stroke="#2f4f74" stroke-width="1"/><rect x="1.0" y="2.0" width="10.0" height="10.0" rx="1.6" fill="#d6bf2d" stroke="#b8a21c" stroke-width=".6"/><path d="M6.0,3.5 v7.0 M3.2,5.3 l5.6,3.4 M3.2,8.7 l5.6,-3.4" stroke="#fffde0" stroke-width="1.5" fill="none"/></g><g transform="translate(597.0,72.0)"><path d="M-9,-10 h17 v17 h-14 v2.5 a1.5,1.5 0 0,1 -3,0z" fill="#e3e5e8" stroke="#a6aaaf" stroke-width=".9"/><path d="M-6,-10 v17" stroke="#b9bdc2" stroke-width=".8"/><path d="M3.5,-11 h6 v9 l-3,-2 l-3,2z" fill="#4f7db2" stroke="#2f4f74" stroke-width=".7"/></g><g transform="translate(628.0,72.0)"><path d="M-9.5,-1.5 A9.5,9 0 0,1 6,-7.5 L8,-10 L9.5,-2 L1.5,-3 L4,-5.2 A6,5.6 0 0,0 -5.2,-1.2z" fill="#4f8fd6" stroke="#3573b9" stroke-width=".6"/><path d="M9.5,1.5 A9.5,9 0 0,1 -6,7.5 L-8,10 L-9.5,2 L-1.5,3 L-4,5.2 A6,5.6 0 0,0 5.2,1.2z" fill="#4f8fd6" stroke="#3573b9" stroke-width=".6"/></g><g transform="translate(672.0,72.0)"><circle cx="-2.5" cy="-3" r="8" fill="#6d97c4" stroke="#9db9d8" stroke-width="1"/><text x="-2.5" y="1.5" font-size="12" font-weight="bold" font-style="italic" fill="#fff" text-anchor="middle" style="font-family:'Liberation Serif',serif">i</text><path transform="translate(0.5,-2.5) scale(1.25)" d="M0,0 L0,10.5 L2.6,8.2 L4.6,12.4 L6.4,11.5 L4.4,7.4 L7.8,7.2z" fill="#fff" stroke="#8a8f96" stroke-width="1"/></g><g transform="translate(704.0,72.0)"><g transform="translate(-2,-2.5)"><rect transform="rotate(0)" x="-1.9" y="-9.6" width="3.8" height="4" rx=".8" fill="#e9edf2" stroke="#8d99a6" stroke-width=".6"/><rect transform="rotate(36)" x="-1.9" y="-9.6" width="3.8" height="4" rx=".8" fill="#e9edf2" stroke="#8d99a6" stroke-width=".6"/><rect transform="rotate(72)" x="-1.9" y="-9.6" width="3.8" height="4" rx=".8" fill="#e9edf2" stroke="#8d99a6" stroke-width=".6"/><rect transform="rotate(108)" x="-1.9" y="-9.6" width="3.8" height="4" rx=".8" fill="#e9edf2" stroke="#8d99a6" stroke-width=".6"/><rect transform="rotate(144)" x="-1.9" y="-9.6" width="3.8" height="4" rx=".8" fill="#e9edf2" stroke="#8d99a6" stroke-width=".6"/><rect transform="rotate(180)" x="-1.9" y="-9.6" width="3.8" height="4" rx=".8" fill="#e9edf2" stroke="#8d99a6" stroke-width=".6"/><rect transform="rotate(216)" x="-1.9" y="-9.6" width="3.8" height="4" rx=".8" fill="#e9edf2" stroke="#8d99a6" stroke-width=".6"/><rect transform="rotate(252)" x="-1.9" y="-9.6" width="3.8" height="4" rx=".8" fill="#e9edf2" stroke="#8d99a6" stroke-width=".6"/><rect transform="rotate(288)" x="-1.9" y="-9.6" width="3.8" height="4" rx=".8" fill="#e9edf2" stroke="#8d99a6" stroke-width=".6"/><rect transform="rotate(324)" x="-1.9" y="-9.6" width="3.8" height="4" rx=".8" fill="#e9edf2" stroke="#8d99a6" stroke-width=".6"/><circle r="7" fill="#e9edf2" stroke="#8d99a6" stroke-width=".7"/><circle r="5" fill="#6d97c4"/><path d="M-1.6,-2.6 L2.8,0 L-1.6,2.6z" fill="#fff"/></g><path transform="translate(0.8,-2.2) scale(1.25)" d="M0,0 L0,10.5 L2.6,8.2 L4.6,12.4 L6.4,11.5 L4.4,7.4 L7.8,7.2z" fill="#fff" stroke="#8a8f96" stroke-width="1"/></g><path d="M723.0,70.0 h8 l-4,4.5z" fill="#000"/><g transform="translate(750.0,72.0)"><path d="M-10,-8.5 L2,-9.5 L4,-2 L0,4.5 L-9,2.5z" fill="#f2e03a" stroke="#b9a417" stroke-width=".8" stroke-dasharray="2,1"/><path d="M2,-9.5 L9.5,-10.5 L8,0 L11,5 L4,7 L0,4.5" fill="none" stroke="#777" stroke-width=".9" stroke-dasharray="2,1.4"/><path transform="translate(0.0,-3.5) scale(1.30)" d="M0,0 L0,10.5 L2.6,8.2 L4.6,12.4 L6.4,11.5 L4.4,7.4 L7.8,7.2z" fill="#fff" stroke="#8a8f96" stroke-width="1"/></g><path d="M769.0,70.0 h8 l-4,4.5z" fill="#000"/><g transform="translate(796.0,72.0)"><rect x="-5" y="-3" width="14" height="12" fill="#f2df4a" stroke="#c8b11e" stroke-width=".7"/><rect x="-9.5" y="-9" width="13.5" height="12" fill="#d9dcdf" stroke="#9ea3a8" stroke-width=".8"/><rect x="-7.5" y="-6.8" width="9.5" height="2.6" fill="#fff"/><rect x="-7.5" y="-2.4" width="9.5" height="2.6" fill="#fff"/></g><path d="M815.0,70.0 h8 l-4,4.5z" fill="#000"/><g transform="translate(843.0,72.0)"><rect x="-10.5" y="-10" width="14" height="14" fill="#f6de4b" stroke="#d2b92a" stroke-width=".7"/><rect x="1.5" y="2" width="9" height="9" rx="2" fill="#f3e3e6" stroke="#c96d7a" stroke-width=".8"/><path d="M4,8.5 L8.5,4.5" stroke="#b9a0c8" stroke-width="1.6"/></g><g transform="translate(872.0,72.0)"><rect x="-9.5" y="-10" width="19" height="19" fill="#f4f8fc" stroke="#7f9dbf" stroke-width=".9"/><rect x="-9.5" y="-10" width="19" height="4.6" fill="#a9c3e0"/><path d="M-7.5,-7.7 h4 M-1.5,-7.7 h8.5" stroke="#5d86b5" stroke-width="1.4"/><path d="M-7.5,-2.5 h4 M-1.5,-2.5 h8.5 M-7.5,1 h4 M-1.5,1 h8.5 M-7.5,4.5 h4 M-1.5,4.5 h8.5" stroke="#8fadcf" stroke-width="1.2"/></g><g transform="translate(903.0,72.0)"><path d="M-9.5,-10 V9 M9.5,-10 V9" stroke="#555" stroke-width="1.2"/><path d="M-10.5,9.5 h21" stroke="#555" stroke-width="1.6"/><path d="M-9,-7.5 h18" stroke="#8a8a8a" stroke-width=".7"/><path d="M-5.9,-7.5 l2.4,-2.4 l2.4,2.4 l-2.4,2.4z" fill="#f28a8a" stroke="#c04343" stroke-width=".6"/><path d="M2.1,-7.5 l2.4,-2.4 l2.4,2.4 l-2.4,2.4z" fill="#f28a8a" stroke="#c04343" stroke-width=".6"/><path d="M-9,-1.5 h18" stroke="#8a8a8a" stroke-width=".7"/><path d="M-6.9,-1.5 l2.4,-2.4 l2.4,2.4 l-2.4,2.4z" fill="#a6d9a6" stroke="#5d9a5d" stroke-width=".6"/><path d="M-2.4,-1.5 l2.4,-2.4 l2.4,2.4 l-2.4,2.4z" fill="#a6d9a6" stroke="#5d9a5d" stroke-width=".6"/><path d="M2.1,-1.5 l2.4,-2.4 l2.4,2.4 l-2.4,2.4z" fill="#a6d9a6" stroke="#5d9a5d" stroke-width=".6"/><path d="M-9,4.5 h18" stroke="#8a8a8a" stroke-width=".7"/><path d="M-6.9,4.5 l2.4,-2.4 l2.4,2.4 l-2.4,2.4z" fill="#9cc3e8" stroke="#4e7fb2" stroke-width=".6"/><path d="M-2.4,4.5 l2.4,-2.4 l2.4,2.4 l-2.4,2.4z" fill="#9cc3e8" stroke="#4e7fb2" stroke-width=".6"/><path d="M2.1,4.5 l2.4,-2.4 l2.4,2.4 l-2.4,2.4z" fill="#9cc3e8" stroke="#4e7fb2" stroke-width=".6"/></g><g transform="translate(935.0,72.0)"><rect transform="rotate(0)" x="-1.8" y="-10.8" width="3.6" height="6" rx="1.6" fill="#6f9ad6"/><rect transform="rotate(45)" x="-1.8" y="-10.8" width="3.6" height="6" rx="1.6" fill="#6f9ad6"/><rect transform="rotate(90)" x="-1.8" y="-10.8" width="3.6" height="6" rx="1.6" fill="#6f9ad6"/><rect transform="rotate(135)" x="-1.8" y="-10.8" width="3.6" height="6" rx="1.6" fill="#6f9ad6"/><rect transform="rotate(180)" x="-1.8" y="-10.8" width="3.6" height="6" rx="1.6" fill="#6f9ad6"/><rect transform="rotate(225)" x="-1.8" y="-10.8" width="3.6" height="6" rx="1.6" fill="#6f9ad6"/><rect transform="rotate(270)" x="-1.8" y="-10.8" width="3.6" height="6" rx="1.6" fill="#6f9ad6"/><rect transform="rotate(315)" x="-1.8" y="-10.8" width="3.6" height="6" rx="1.6" fill="#6f9ad6"/><circle r="6.6" fill="#6f9ad6"/><circle r="2.6" fill="#f0f0f0"/></g><g transform="translate(966.0,72.0)"><text x="0" y="8.2" font-size="26" font-weight="bold" fill="#8e1f9c" text-anchor="middle" style="font-family:'Liberation Serif',serif">Σ</text></g><g transform="translate(996.0,72.0)"><path d="M-9.5,-6 h19 M-9.5,-8 v4 M9.5,-8 v4" stroke="#3d5a80" stroke-width="1.3" fill="none"/><rect x="-10.5" y="0" width="21" height="7" rx="1" fill="#d9d9d4" stroke="#6b6b6b" stroke-width="1"/><path d="M-8,0 v3.6 M-5.5,0 v2.4 M-3,0 v3.6 M-.5,0 v2.4 M2,0 v3.6 M4.5,0 v2.4 M7,0 v3.6" stroke="#555" stroke-width=".8"/></g><path d="M1016.0,70.0 h8 l-4,4.5z" fill="#000"/><g transform="translate(1043.0,72.0)"><path d="M-9,-9.5 h17.5 a2.5,2.5 0 0,1 2.5,2.5 v6.5 a2.5,2.5 0 0,1 -2.5,2.5 h-8 l-5,4.5 l1,-4.5 h-5.5 a2.5,2.5 0 0,1 -2.5,-2.5 v-6.5 a2.5,2.5 0 0,1 2.5,-2.5z" transform="translate(.8,0)" fill="#f8e36a" stroke="#d2b637" stroke-width=".9"/><circle cx="-5.5" cy="7" r="3.6" fill="#7fb37f" stroke="#4d8a4d" stroke-width="1"/></g><g transform="translate(1075.0,72.0)"><path d="M-10,-10 h21 v14.5 h-12 l-8.5,6.5 l4,-6.5 h-4.5z" fill="#f1f4f7" stroke="#a0a6ad" stroke-width=".9"/><text x="1" y="1.5" font-size="13.5" fill="#444" text-anchor="middle" style="font-family:'Liberation Serif',serif">T</text></g><path d="M1093.0,70.0 h8 l-4,4.5z" fill="#000"/>
<g transform="translate(25.0,106.0)"><rect transform="rotate(-20 -4 2)" x="-11" y="-5" width="12" height="12" fill="#e0712d" stroke="#b3531a" stroke-width=".6"/><rect transform="rotate(-10 -2 0)" x="-8" y="-7" width="12" height="12" fill="#f2c83a" stroke="#c9a21e" stroke-width=".6"/><rect transform="rotate(8 3 -3)" x="-3" y="-10" width="13" height="13" fill="#6d97c4" stroke="#3f6b9d" stroke-width=".7"/><rect x="2.0" y="2.5" width="10.0" height="10.0" rx="1.6" fill="#6fa86f" stroke="#4e8a4e" stroke-width=".6"/><path d="M7.0,4.1 v6.8 M3.6,7.5 h6.8" stroke="#fff" stroke-width="2" fill="none"/></g><g transform="translate(56.0,106.0)"><path d="M-11,-2 L-1,-7 L11,-2 L11,7 L1,11.5 L-11,6z" fill="#e8c82c" stroke="#8a7410" stroke-width=".8"/><path d="M-11,-2 L1,3 L11,-2 M1,3 V11.5" stroke="#8a7410" stroke-width=".8" fill="none"/><path d="M1,3 L11,-2 V7 L1,11.5z" fill="#f7e46a"/><g transform="translate(0.0,-5.0)"><ellipse rx="6.5" ry="5.5" fill="#7fb0e6" stroke="#4f7fb4" stroke-width=".8"/><ellipse rx="2.9" ry="5.5" fill="none" stroke="#dfeaf6" stroke-width="1"/><path d="M-6.5,0 H6.5 M0,-5.5 V5.5" stroke="#dfeaf6" stroke-width="1"/><path d="M-6,-4 l3,-1 l1,3 l-2,3 l-2,-1z M2,-5 l4,1 l1,4 l-3,2 l-2,-3z M-1,3 l3,1 l-1,3 l-2,-1z" fill="#6b7d6a" opacity=".75"/></g><rect x="2.2" y="2.8" width="9.5" height="9.5" rx="1.6" fill="#d6bf2d" stroke="#b8a21c" stroke-width=".6"/><path d="M7.0,4.2 v6.5 M4.2,5.8 l5.6,3.4 M4.2,9.2 l5.6,-3.4" stroke="#fffde0" stroke-width="1.5" fill="none"/></g><g transform="translate(87.0,106.0)"><path d="M-9,-8.5 L-2.5,6 L2,-8.5 L9,-8.5" fill="none" stroke="#444" stroke-width="1.2"/><circle cx="-9" cy="-8.5" r="1.6" fill="#fff" stroke="#444" stroke-width=".8"/><circle cx="2" cy="-8.5" r="1.6" fill="#fff" stroke="#444" stroke-width=".8"/><circle cx="9" cy="-8.5" r="1.6" fill="#fff" stroke="#444" stroke-width=".8"/><circle cx="-2.5" cy="6" r="1.7" fill="#fff" stroke="#444" stroke-width=".9"/><rect x="2.8" y="2.8" width="9.5" height="9.5" rx="1.6" fill="#d6bf2d" stroke="#b8a21c" stroke-width=".6"/><path d="M7.5,4.2 v6.5 M4.7,5.8 l5.6,3.4 M4.7,9.2 l5.6,-3.4" stroke="#fffde0" stroke-width="1.5" fill="none"/></g><g transform="translate(118.0,106.0)"><path d="M-10.5,11 C-8,2 -2,-7 11,-11 C10,-3 3,3 -7,5z" fill="#7fa6d2" stroke="#41648c" stroke-width=".9"/><path d="M-10.5,11 C-6,2 0,-4 8,-8" fill="none" stroke="#41648c" stroke-width=".8"/><rect x="2.8" y="2.8" width="9.5" height="9.5" rx="1.6" fill="#d6bf2d" stroke="#b8a21c" stroke-width=".6"/><path d="M7.5,4.2 v6.5 M4.7,5.8 l5.6,3.4 M4.7,9.2 l5.6,-3.4" stroke="#fffde0" stroke-width="1.5" fill="none"/></g><g transform="translate(149.0,106.0)"><rect x="-9.5" y="-6" width="17" height="11" fill="#5d8cc4" stroke="#35597f" stroke-width=".9"/><path d="M-7,-6 v-4 M-4,-6 v-4 M-1,-6 v-4 M2,-6 v-4 M5,-6 v-4 M-7,5 v4 M-4,5 v4 M-1,5 v4 M2,5 v4" stroke="#35597f" stroke-width="1.2"/><rect x="2.8" y="2.8" width="9.5" height="9.5" rx="1.6" fill="#d6bf2d" stroke="#b8a21c" stroke-width=".6"/><path d="M7.5,4.2 v6.5 M4.7,5.8 l5.6,3.4 M4.7,9.2 l5.6,-3.4" stroke="#fffde0" stroke-width="1.5" fill="none"/></g><g transform="translate(187.0,106.0)"><rect x="-10.5" y="-10.5" width="21" height="21" rx="1.5" fill="#a9bcd6" stroke="#4a6a92" stroke-width="1.1"/><path d="M-9,-9 L-2.5,6.5 L3.5,-9 L9,-9" fill="none" stroke="#3c5a80" stroke-width="1.2"/><circle cx="-2.5" cy="6.5" r="1.7" fill="#fff" stroke="#3c5a80" stroke-width=".8"/><circle cx="3.5" cy="-9" r="1.4" fill="#fff" stroke="#3c5a80" stroke-width=".7"/><rect x="3.2" y="3.2" width="9.5" height="9.5" rx="1.6" fill="#d6bf2d" stroke="#b8a21c" stroke-width=".6"/><path d="M8.0,4.8 v6.5 M5.2,6.3 l5.6,3.4 M5.2,9.7 l5.6,-3.4" stroke="#fffde0" stroke-width="1.5" fill="none"/></g><g transform="translate(232.0,106.0)"><g transform="translate(-3.0,0.0) scale(0.95) rotate(0)"><path d="M-6.5,11 L-5,4 L4,-10 L8,-7.5 L-1,6.5z" fill="#b9663a" stroke="#8a4420" stroke-width=".9"/><path d="M-6.5,11 L-5,4 L-1,6.5z" fill="#e8d6b0" stroke="#8c8c8c" stroke-width=".6"/><path d="M-6.5,11 L-5.9,8.2 L-4.2,9.3z" fill="#444"/><path d="M4,-10 L8,-7.5 L6.8,-5.6 L2.8,-8.1z" fill="#f3f3f3" stroke="#999" stroke-width=".5"/></g><g transform="translate(2.0,0.0) scale(0.95) rotate(0)"><path d="M-6.5,11 L-5,4 L4,-10 L8,-7.5 L-1,6.5z" fill="#e8601c" stroke="#a3400e" stroke-width=".9"/><path d="M-6.5,11 L-5,4 L-1,6.5z" fill="#e8d6b0" stroke="#8c8c8c" stroke-width=".6"/><path d="M-6.5,11 L-5.9,8.2 L-4.2,9.3z" fill="#444"/><path d="M4,-10 L8,-7.5 L6.8,-5.6 L2.8,-8.1z" fill="#f3f3f3" stroke="#999" stroke-width=".5"/></g><path d="M4.0,7.0 h8 l-4,4.5z" fill="#000"/></g><g transform="translate(263.0,106.0)"><g transform="translate(0.0,0.0) scale(1.00) rotate(0)"><path d="M-6.5,11 L-5,4 L4,-10 L8,-7.5 L-1,6.5z" fill="#f0dc3c" stroke="#b09a14" stroke-width=".9"/><path d="M-6.5,11 L-5,4 L-1,6.5z" fill="#e8d6b0" stroke="#8c8c8c" stroke-width=".6"/><path d="M-6.5,11 L-5.9,8.2 L-4.2,9.3z" fill="#444"/><path d="M4,-10 L8,-7.5 L6.8,-5.6 L2.8,-8.1z" fill="#f3f3f3" stroke="#999" stroke-width=".5"/></g></g><g transform="translate(293.0,106.0)"><g transform="translate(-1.0,-1.0) scale(0.92)"><rect x="-10" y="-10.5" width="20" height="20.5" rx="2" fill="#6d97c4" stroke="#41648c" stroke-width="1"/><rect x="-6.5" y="-9" width="13" height="8" fill="#fff"/><path d="M-5,-7.300 h10 M-5,-5 h10 M-5,-2.700 h10" stroke="#555" stroke-width=".75"/><rect x="-5.5" y="3.5" width="11" height="6" fill="#eef2f7"/><rect x="-4" y="4.5" width="2.5" height="4" fill="#41648c"/></g><g transform="translate(6.5,4.0) scale(0.55) rotate(0)"><path d="M-6.5,11 L-5,4 L4,-10 L8,-7.5 L-1,6.5z" fill="#e8601c" stroke="#a3400e" stroke-width=".9"/><path d="M-6.5,11 L-5,4 L-1,6.5z" fill="#e8d6b0" stroke="#8c8c8c" stroke-width=".6"/><path d="M-6.5,11 L-5.9,8.2 L-4.2,9.3z" fill="#444"/><path d="M4,-10 L8,-7.5 L6.8,-5.6 L2.8,-8.1z" fill="#f3f3f3" stroke="#999" stroke-width=".5"/></g></g><g transform="translate(325.0,106.0)"><path transform="translate(0.0,-1.0) scale(1.00)" d="M-10,-5 C-10,-9.5 -4,-10 0,-9 C4,-8 8,-9.5 9,-5 C10,-1 5,0 2,0 C-1,0 -2,3 -5,2.5 C-9,2 -10,-1 -10,-5z" fill="#8cbf8c" stroke="#5b8f5b" stroke-width="1"/><rect x="1.2" y="2.2" width="10.5" height="10.5" rx="1.6" fill="#d6bf2d" stroke="#b8a21c" stroke-width=".6"/><path d="M6.5,3.8 v7.5 M3.7,5.8 l5.6,3.4 M3.7,9.2 l5.6,-3.4" stroke="#fffde0" stroke-width="1.5" fill="none"/></g><g transform="translate(356.0,106.0)"><rect x="-9.5" y="-9.5" width="5" height="5" fill="#dfe3ea" stroke="#3c4a63" stroke-width="1"/><circle cx="-7" cy="-7" r="1" fill="#3c4a63"/><path d="M-4.5,-7 h10" stroke="#9a9a9a" stroke-width="1.2"/><path d="M-7,-4.5 L-10,8" stroke="#777" stroke-width=".9"/><path d="M-1,-2 L9.5,8.5" stroke="#c9a21e" stroke-width="3"/><path d="M7,-2.5 L-2.5,8" stroke="#e0b92a" stroke-width="2.6"/><path d="M-2.5,-1 l4,-3.5 l3,3" stroke="#8d99a6" stroke-width="2.4" fill="none"/></g><path d="M375.0,102.0 h8 l-4,4.5z" fill="#000"/><g transform="translate(402.0,106.0)"><rect x="-10" y="-9" width="19" height="18" fill="#e4e4e4"/><path d="M-10,-3 h19 M-10,3 h19" stroke="#f2f2f2" stroke-width="1.2"/><path d="M-4,8 L6,-9" stroke="#cfcfcf" stroke-width="3.2"/></g><g transform="translate(432.0,106.0)"><rect x="-9.5" y="-9" width="13" height="9" fill="#e6dfdf" stroke="#d7cdcd" stroke-width=".7"/><path d="M-7,-3 h18 l-1.5,13 h-15z" fill="#e9dede" stroke="#d9caca" stroke-width=".7"/><path d="M-3,-3 v13 M2,-3 v13 M7,-3 v13 M-6.5,2 h17" stroke="#f2ecec" stroke-width="1"/></g><g transform="translate(464.0,106.0)"><path d="M-10.5,-7.5 L4,3 M-10.5,-1 L5,-5" stroke="#d3d3d3" stroke-width="2"/><ellipse cx="6.5" cy="-5.2" rx="3" ry="2.3" fill="none" stroke="#cdcdcd" stroke-width="1.4" transform="rotate(-25 6.5 -5.2)"/><ellipse cx="6" cy="5" rx="2.4" ry="3.2" fill="none" stroke="#cdcdcd" stroke-width="1.4" transform="rotate(-30 6 5)"/></g><g transform="translate(494.0,106.0)"><path d="M-3.0,-9.5 h7.5 l3.5,3.5 v10.5 h-11.0z" fill="#f4f4f4" stroke="#d2d2d2" stroke-width="1.1"/><path d="M4.5,-9.5 v3.5 h3.5" fill="none" stroke="#d2d2d2" stroke-width="1"/><path d="M-7.8,-5.5 h8.0 l3.5,3.5 v11.5 h-11.5z" fill="#f6f6f6" stroke="#cfcfcf" stroke-width="1.1"/><path d="M0.2,-5.5 v3.5 h3.5" fill="none" stroke="#cfcfcf" stroke-width="1"/><path d="M-6,1 h6 M-6,3.5 h7 M-6,6 h7" stroke="#dcdcdc" stroke-width=".9"/></g><g transform="translate(525.0,106.0)"><rect x="-8.5" y="-9.5" width="15" height="19" fill="#ededed" stroke="#cfcfcf" stroke-width=".9"/><rect x="-4" y="-11" width="6" height="3" fill="#e1e1e1" stroke="#cfcfcf" stroke-width=".6"/><path d="M-5.0,-5.5 h7.5 l3.5,3.5 v10.5 h-11.0z" fill="#f7f7f7" stroke="#cfcfcf" stroke-width="1.1"/><path d="M2.5,-5.5 v3.5 h3.5" fill="none" stroke="#cfcfcf" stroke-width="1"/><path d="M-3.5,1 h6 M-3.5,3.5 h7 M-3.5,6 h7" stroke="#dcdcdc" stroke-width=".9"/></g><g transform="translate(557.0,106.0)"><path d="M-10.5,-3.5 L-3,-10 V-6 C6,-6.5 9.5,-1 8,5 C7,8.5 3,9.5 0.5,8.5 L1.5,5.5 C4.5,6 5.5,2 3.5,0 C1.5,-1.8 -1,-1.6 -3,-1.5 V3z" fill="#ee6f2d" stroke="#c9551c" stroke-width=".6"/></g><g transform="translate(588.0,106.0)"><path transform="scale(-1,1)" d="M-10.5,-3.5 L-3,-10 V-6 C6,-6.5 9.5,-1 8,5 C7,8.5 3,9.5 0.5,8.5 L1.5,5.5 C4.5,6 5.5,2 3.5,0 C1.5,-1.8 -1,-1.6 -3,-1.5 V3z" fill="#dedede" stroke="#cfcfcf" stroke-width=".6"/></g><g transform="translate(632.0,106.0)"><g transform="translate(0.0,-3.0)"><path d="M-11,0 L-7,-5.600 H10 V5.600 H-7z" fill="#f4dc49" stroke="#b79f1a" stroke-width="1"/><text x="1.8" y="3.500" font-size="8.9" font-weight="bold" text-anchor="middle" fill="#3b3200" style="font-family:'Liberation Sans',sans-serif">abc</text></g></g><g transform="translate(663.0,106.0)"><circle cx="-4" cy="-4" r="6.6" fill="#2a9a3e"/><path d="M-4,-4 L-9.8,-7.2 A6.6,6.6 0 0,1 1.2,-8.2z" fill="#f2dc2a"/><path d="M-4,-4 L1.2,-8.2 A6.6,6.6 0 0,1 -1,1.9z" fill="#c4261f"/><rect x="-2" y="3.5" width="3.2" height="6" fill="#f2dc2a" stroke="#b9a417" stroke-width=".4"/><rect x="1.6" y="-1" width="3.4" height="10.5" fill="#2a9a3e" stroke="#1b6b2a" stroke-width=".4"/><rect x="5.4" y="4.5" width="3.4" height="5" fill="#b3201b" stroke="#7c1411" stroke-width=".4"/></g><g transform="translate(702.0,106.0)"><g transform="translate(-1.0,-3.0)"><path d="M-11,0 L-7,-5.600 H10 V5.600 H-7z" fill="#cfe0f5" stroke="#7ea3cf" stroke-width="1"/><text x="1.8" y="3.500" font-size="8.9" font-weight="bold" text-anchor="middle" fill="#2b3b55" style="font-family:'Liberation Sans',sans-serif">ab</text></g><path d="M6.5,5.5 v-6" stroke="#777" stroke-width="1.2"/><circle cx="6.5" cy="5.5" r="3.6" fill="#c0282d" stroke="#8e1a1e" stroke-width=".6"/><circle cx="5.5" cy="4.3" r="1.1" fill="#e88" /></g><g transform="translate(732.0,106.0)"><g transform="translate(0.0,-3.0)"><path d="M-11,0 L-7,-5.600 H10 V5.600 H-7z" fill="#fbe3e3" stroke="#d8242a" stroke-width="1"/><text x="1.8" y="3.500" font-size="8.9" font-weight="bold" text-anchor="middle" fill="#d8242a" style="font-family:'Liberation Sans',sans-serif">abc</text></g></g><g transform="translate(771.0,106.0)"><g transform="translate(-1.0,-3.0)"><path d="M-11,0 L-7,-5.600 H10 V5.600 H-7z" fill="#f4dc49" stroke="#b79f1a" stroke-width="1"/><text x="1.8" y="3.500" font-size="8.9" font-weight="bold" text-anchor="middle" fill="#3b3200" style="font-family:'Liberation Sans',sans-serif">ab</text></g><path d="M6.5,5.5 v-6" stroke="#777" stroke-width="1.2"/><circle cx="6.5" cy="5.5" r="3.6" fill="#c0282d" stroke="#8e1a1e" stroke-width=".6"/><circle cx="5.5" cy="4.3" r="1.1" fill="#e88" /></g><g transform="translate(802.0,106.0)"><g transform="translate(0.0,-4.0)"><path d="M-11,0 L-7,-5.600 H10 V5.600 H-7z" fill="#f4dc49" stroke="#b79f1a" stroke-width="1"/><text x="1.8" y="3.500" font-size="8.9" font-weight="bold" text-anchor="middle" fill="#3b3200" style="font-family:'Liberation Sans',sans-serif">abc</text></g><path d="M-7,7 C-3,2.5 5,2.5 9,7 C5,11 -3,11 -7,7z" fill="#fff" stroke="#55606e" stroke-width=".8"/><circle cx="1" cy="6.8" r="2.6" fill="#4f7dc0"/><circle cx="1" cy="6.8" r="1.1" fill="#1d2a44"/></g><g transform="translate(833.0,106.0)"><g transform="translate(-1.0,-4.0)"><path d="M-11,0 L-7,-5.600 H10 V5.600 H-7z" fill="#f4dc49" stroke="#b79f1a" stroke-width="1"/><text x="1.8" y="3.500" font-size="8.9" font-weight="bold" text-anchor="middle" fill="#3b3200" style="font-family:'Liberation Sans',sans-serif">abc</text></g><rect x="0.8" y="1.2" width="10.5" height="10.5" rx="1.8" fill="#3f5e78"/><path d="M2.4,5.0 h3.2 v-2.2 l3.6,3.7 l-3.6,3.7 v-2.2 h-3.2z" fill="#fff"/></g><g transform="translate(864.0,106.0)"><g transform="translate(-1.0,-4.0)"><path d="M-11,0 L-7,-5.600 H10 V5.600 H-7z" fill="#f4dc49" stroke="#b79f1a" stroke-width="1"/><text x="1.8" y="3.500" font-size="8.9" font-weight="bold" text-anchor="middle" fill="#3b3200" style="font-family:'Liberation Sans',sans-serif">abc</text></g><rect x="1.2" y="1.2" width="10.5" height="10.5" rx="1.8" fill="#3f5e78"/><path d="M3.9,7.1 a2.6,2.6 0 1,1 2.4,2.6" stroke="#fff" stroke-width="1.5" fill="none"/><path d="M5.3,8.7 l2.6,-1 l-.4,2.8z" fill="#fff"/></g><g transform="translate(895.0,106.0)"><g transform="translate(-1.0,-4.0)"><path d="M-11,0 L-7,-5.600 H10 V5.600 H-7z" fill="#f4dc49" stroke="#b79f1a" stroke-width="1"/><text x="1.8" y="3.500" font-size="8.9" font-weight="bold" text-anchor="middle" fill="#3b3200" style="font-family:'Liberation Sans',sans-serif">abc</text></g><rect x="1.5" y="1.5" width="10" height="10" rx="1.8" fill="#d9bf2a" stroke="#b39a14" stroke-width=".6"/><path d="M4,9.5 L9.5,4" stroke="#fff" stroke-width="2.2"/><path d="M3.5,10 l.6,-2 l1.4,1.4z" fill="#fff"/></g><g transform="translate(940.0,106.0)"><path d="M-10,-8 C-10,-12 10,-12 10,-8 V8 C10,12 -10,12 -10,8z" fill="#16a02c" stroke="#0d6e1c" stroke-width=".7"/><path d="M-10,-2 C-4,2 4,2 10,-2 M-10,4 C-4,8 4,8 10,4" stroke="#5fd06a" stroke-width="1" fill="none" opacity=".8"/><ellipse cx="0" cy="-8" rx="10" ry="3" fill="#32c046"/><path d="M-2,6 L4,-2 L8,1 L3,8z" fill="#e9f2e4" stroke="#8fae8a" stroke-width=".6"/><path d="M5,-3 l2.5,-3 M7.5,-1 l2.5,-3" stroke="#e9f2e4" stroke-width="1.3"/></g><g transform="translate(970.0,106.0)"><text x="-2" y="10" font-size="17" font-weight="bold" fill="#35c43a" stroke="#1f8a24" stroke-width=".7" text-anchor="middle" style="font-family:'Liberation Sans',sans-serif">ID</text><path d="M0,-1 L9,-9.5" stroke="#000" stroke-width="2"/><path d="M11.5,-12 L3,-10 L9.5,-4z" fill="#000"/></g><g transform="translate(1001.0,106.0)"><rect x="-10.5" y="-10" width="21" height="20.5" fill="#9aa98f" stroke="#5e7a55" stroke-width=".6"/><rect x="-10.5" y="-10" width="21" height="5" fill="#138a2a"/><rect x="-8" y="-8.5" width="18" height="1.6" fill="#e9f5e9"/><path d="M-10.5,2 l4,-5 l3,3 l4,-6 l4,5 l3,-3 l3,4 V10.5 H-10.5z" fill="#5f8054"/><rect x="-10.5" y="-5" width="21" height="4" fill="#a9c7a0" opacity=".6"/></g><g transform="translate(1032.0,106.0)"><path d="M-10.5,-7 V7 C-10.5,12 10.5,12 10.5,7 V-7z" fill="#6d97c4" stroke="#3f6b9d" stroke-width=".8"/><ellipse cx="0" cy="-7" rx="10.5" ry="3.6" fill="#a9c5e2" stroke="#3f6b9d" stroke-width=".8"/><path d="M-10.5,-2 C-10.5,3 10.5,3 10.5,-2 M-10.5,3 C-10.5,8 10.5,8 10.5,3" fill="none" stroke="#3f6b9d" stroke-width=".8"/></g><g transform="translate(1077.0,106.0)"><g transform="translate(-1.0,-2.0)"><ellipse rx="10.5" ry="8.9" fill="#7fb0e6" stroke="#4f7fb4" stroke-width=".8"/><ellipse rx="4.7" ry="8.9" fill="none" stroke="#dfeaf6" stroke-width="1"/><path d="M-10.5,0 H10.5 M0,-8.9 V8.9" stroke="#dfeaf6" stroke-width="1"/><path d="M-6,-4 l3,-1 l1,3 l-2,3 l-2,-1z M2,-5 l4,1 l1,4 l-3,2 l-2,-3z M-1,3 l3,1 l-1,3 l-2,-1z" fill="#6b7d6a" opacity=".75"/></g><rect x="2" y="3" width="9" height="9" rx="1.5" fill="#5f8f6a" stroke="#41704a" stroke-width=".5"/><path d="M3.2,6.5 h6.6 l-3.3,4z" fill="#000"/></g><g transform="translate(1108.0,106.0)"><g transform="translate(-1.0,-2.0)"><ellipse rx="10.5" ry="8.9" fill="#7fb0e6" stroke="#4f7fb4" stroke-width=".8"/><ellipse rx="4.7" ry="8.9" fill="none" stroke="#dfeaf6" stroke-width="1"/><path d="M-10.5,0 H10.5 M0,-8.9 V8.9" stroke="#dfeaf6" stroke-width="1"/><path d="M-6,-4 l3,-1 l1,3 l-2,3 l-2,-1z M2,-5 l4,1 l1,4 l-3,2 l-2,-3z M-1,3 l3,1 l-1,3 l-2,-1z" fill="#6b7d6a" opacity=".75"/></g><rect x="2" y="3" width="9" height="9" rx="1.5" fill="#74ad74" stroke="#4e8a4e" stroke-width=".5"/><circle cx="6" cy="7" r="2.2" fill="none" stroke="#fff" stroke-width="1.1"/><path d="M7.6,8.6 l2.2,2.2" stroke="#fff" stroke-width="1.2"/></g><g transform="translate(1140.0,106.0)"><g transform="translate(0.0,-2.5)"><ellipse rx="10.5" ry="8.9" fill="#7fb0e6" stroke="#4f7fb4" stroke-width=".8"/><ellipse rx="4.7" ry="8.9" fill="none" stroke="#dfeaf6" stroke-width="1"/><path d="M-10.5,0 H10.5 M0,-8.9 V8.9" stroke="#dfeaf6" stroke-width="1"/><path d="M-6,-4 l3,-1 l1,3 l-2,3 l-2,-1z M2,-5 l4,1 l1,4 l-3,2 l-2,-3z M-1,3 l3,1 l-1,3 l-2,-1z" fill="#6b7d6a" opacity=".75"/></g><path d="M-7,1.5 L-3.5,-2 H3.5 L7,1.5 L10,7 A3.5,3.5 0 1,1 3.2,8 L1.8,5.5 H-1.8 L-3.2,8 A3.5,3.5 0 1,1 -10,7z" fill="#0b0b0b"/><circle cx="-6.5" cy="8" r="1.7" fill="#e8e8e8"/><circle cx="6.5" cy="8" r="1.7" fill="#e8e8e8"/></g><g transform="translate(1185.0,106.0)"><path d="M-2,-10.5 C-8,-10.5 -7.5,-8 -7.5,-6 V-3.5 H-1 V-2.5 H-8.5 C-11.5,-2.5 -11.5,4 -8.5,4 H-6.5 V1 C-6.5,-1 -5,-2.2 -3,-2.2 H2.5 C4.5,-2.2 5,-3.5 5,-5 V-7.5 C5,-10 1,-10.5 -2,-10.5z" fill="#3f7fbf"/><circle cx="-4.6" cy="-7.6" r="1" fill="#fff"/><path d="M0,10.5 C6,10.5 5.5,8 5.5,6 V3.5 H-1 V2.5 H6.5 C9.5,2.5 9.5,-4 6.5,-4 H4.5 V-1 C4.5,1 3,2.2 1,2.2 H-4.5 C-6.5,2.2 -7,3.5 -7,5 V7.5 C-7,10 -3,10.5 0,10.5z" transform="translate(1.5,0)" fill="#f7d44a"/><text x="8" y="12" font-size="9" font-weight="bold" fill="#444" text-anchor="middle" style="font-family:'Liberation Sans',sans-serif">&gt;</text></g><g transform="translate(1216.0,106.0)"><text x="0" y="-1" font-size="8.6" font-weight="bold" fill="#3a3f47" text-anchor="middle" style="font-family:'Liberation Sans',sans-serif">KML</text><rect x="3.0" y="3.5" width="9.0" height="9.0" rx="1.6" fill="#6fa86f" stroke="#4e8a4e" stroke-width=".6"/><path d="M7.5,5.1 v5.8 M4.6,8.0 h5.8" stroke="#fff" stroke-width="2" fill="none"/></g><g transform="translate(1247.0,106.0)"><text x="0" y="-3" font-size="8.2" font-weight="bold" fill="#111" text-anchor="middle" style="font-family:'Liberation Sans',sans-serif">HTML</text><rect x="1.5" y="2.5" width="10.0" height="10.0" rx="1.6" fill="#d6bf2d" stroke="#b8a21c" stroke-width=".6"/><path d="M6.5,4.0 v7.0 M3.7,5.8 l5.6,3.4 M3.7,9.2 l5.6,-3.4" stroke="#fffde0" stroke-width="1.5" fill="none"/></g><g transform="translate(1278.0,106.0)"><rect x="-11" y="-9" width="20" height="14" rx="5.5" fill="#3f5e88"/><rect x="-7" y="-7" width="5" height="5" fill="#22344f"/><rect x="-2" y="-7" width="5" height="5" fill="#86a6cf"/><rect x="3" y="-7" width="4" height="5" fill="#22344f"/><rect x="-7" y="-2" width="5" height="5" fill="#86a6cf"/><rect x="-2" y="-2" width="5" height="5" fill="#22344f"/><rect x="3" y="-2" width="4" height="5" fill="#86a6cf"/><rect x="3.0" y="3.5" width="9.0" height="9.0" rx="1.6" fill="#6fa86f" stroke="#4e8a4e" stroke-width=".6"/><path d="M7.5,5.1 v5.8 M4.6,8.0 h5.8" stroke="#fff" stroke-width="2" fill="none"/></g><g transform="translate(1309.0,106.0)"><rect x="-11.6" y="-11.0" width="4.400" height="4.400" fill="#a9c15c" stroke="#fff" stroke-opacity=".35" stroke-width=".5"/><rect x="-5.7" y="-11.0" width="4.400" height="4.400" fill="#8fc0ea" stroke="#fff" stroke-opacity=".35" stroke-width=".5"/><rect x="0.2" y="-11.0" width="4.400" height="4.400" fill="#f29a74" stroke="#fff" stroke-opacity=".35" stroke-width=".5"/><rect x="6.1" y="-11.0" width="4.400" height="4.400" fill="#c4b0f0" stroke="#fff" stroke-opacity=".35" stroke-width=".5"/><rect x="-11.6" y="-5.2" width="4.400" height="4.400" fill="#a9c15c" stroke="#fff" stroke-opacity=".35" stroke-width=".5"/><rect x="-5.7" y="-5.2" width="4.400" height="4.400" fill="#8fc0ea" stroke="#fff" stroke-opacity=".35" stroke-width=".5"/><rect x="0.2" y="-5.2" width="4.400" height="4.400" fill="#f29a74" stroke="#fff" stroke-opacity=".35" stroke-width=".5"/><rect x="6.1" y="-5.2" width="4.400" height="4.400" fill="#c4b0f0" stroke="#fff" stroke-opacity=".35" stroke-width=".5"/><rect x="-11.6" y="0.6" width="4.400" height="4.400" fill="#f29a74" stroke="#fff" stroke-opacity=".35" stroke-width=".5"/><rect x="-5.7" y="0.6" width="4.400" height="4.400" fill="#c4b0f0" stroke="#fff" stroke-opacity=".35" stroke-width=".5"/><rect x="0.2" y="0.6" width="4.400" height="4.400" fill="#a9c15c" stroke="#fff" stroke-opacity=".35" stroke-width=".5"/><rect x="6.1" y="0.6" width="4.400" height="4.400" fill="#8fc0ea" stroke="#fff" stroke-opacity=".35" stroke-width=".5"/><rect x="-11.6" y="6.4" width="4.400" height="4.400" fill="#f29a74" stroke="#fff" stroke-opacity=".35" stroke-width=".5"/><rect x="-5.7" y="6.4" width="4.400" height="4.400" fill="#c4b0f0" stroke="#fff" stroke-opacity=".35" stroke-width=".5"/><rect x="0.2" y="6.4" width="4.400" height="4.400" fill="#a9c15c" stroke="#fff" stroke-opacity=".35" stroke-width=".5"/><rect x="6.1" y="6.4" width="4.400" height="4.400" fill="#8fc0ea" stroke="#fff" stroke-opacity=".35" stroke-width=".5"/></g><g transform="translate(1340.0,106.0)"><path d="M-10,-10.5 h19 v19 h-19z M-3.7,-10.5 v19 M2.7,-10.5 v19 M-10,-4.2 h19 M-10,2.2 h19" fill="#f4f8fc" stroke="#86a8d6" stroke-width="1.1"/><rect x="3.2" y="3.2" width="9.5" height="9.5" rx="1.6" fill="#d6bf2d" stroke="#b8a21c" stroke-width=".6"/><path d="M8.0,4.8 v6.5 M5.2,6.3 l5.6,3.4 M5.2,9.7 l5.6,-3.4" stroke="#fffde0" stroke-width="1.5" fill="none"/></g><g transform="translate(1385.0,106.0)"><rect x="-10" y="-10" width="20" height="20.5" fill="#5d8cc4" stroke="#2f4660" stroke-width=".8"/><rect x="-10" y="-10" width="5" height="20.5" fill="#25364a"/><text x="2.5" y="5.5" font-size="13" fill="#fff" text-anchor="middle" style="font-family:'Liberation Sans',sans-serif">?</text></g><g transform="translate(1432.3,108.0)"><path d="M-13,0 H-4 M4,0 H9.500 M0,-15 V-4 M0,4 V7" stroke="#222" stroke-width="1"/><circle r="3.4" fill="none" stroke="#b32d2d" stroke-width="1" stroke-dasharray="3,2.3"/></g>
<g transform="translate(25.0,140.0)"><path d="M-10,10 V-8 L8,10z" fill="#e2e2e2" stroke="#cdcdcd" stroke-width=".9"/><path d="M-6,6 V0 L0,6z" fill="#f0f0f0" stroke="#cdcdcd" stroke-width=".7"/><rect x="4" y="-10" width="6" height="20" fill="#e8e8e8" stroke="#d2d2d2" stroke-width=".7"/></g><g transform="translate(58.0,140.0)"><path transform="translate(-1.0,-2.0) scale(1.00)" d="M-10,-5 C-10,-9.5 -4,-10 0,-9 C4,-8 8,-9.5 9,-5 C10,-1 5,0 2,0 C-1,0 -2,3 -5,2.5 C-9,2 -10,-1 -10,-5z" fill="#8cbf8c" stroke="#5b8f5b" stroke-width="1"/><rect x="1.8" y="1.2" width="10.5" height="10.5" rx="1.8" fill="#3f5e78"/><path d="M3.4,5.0 h3.2 v-2.2 l3.6,3.7 l-3.6,3.7 v-2.2 h-3.2z" fill="#fff"/></g><path d="M75.0,135.0 h8 l-4,4.5z" fill="#000"/><g transform="translate(103.0,140.0)"><path transform="translate(-1.0,-2.0) scale(1.00)" d="M-10,-5 C-10,-9.5 -4,-10 0,-9 C4,-8 8,-9.5 9,-5 C10,-1 5,0 2,0 C-1,0 -2,3 -5,2.5 C-9,2 -10,-1 -10,-5z" fill="#8cbf8c" stroke="#5b8f5b" stroke-width="1"/><rect x="1.8" y="1.2" width="10.5" height="10.5" rx="1.8" fill="#3f5e78"/><path d="M4.4,7.1 a2.6,2.6 0 1,1 2.4,2.6" stroke="#fff" stroke-width="1.5" fill="none"/><path d="M5.8,8.7 l2.6,-1 l-.4,2.8z" fill="#fff"/></g><g transform="translate(133.0,140.0)"><circle cx="-3" cy="-3.5" r="7.5" fill="#8cbf8c" stroke="#5b8f5b" stroke-width="1"/><path d="M-3,3.5 L2,-3.5 H9 L12,3.5 L8.5,10.5 H0z" fill="#9fc1e4" stroke="#5a86b8" stroke-width="1" opacity=".95"/><path d="M-4,-3.5 L4,4" stroke="#33506f" stroke-width="1"/><path d="M5.5,5.5 l-3.6,-.8 l2.8,-2.8z" fill="#33506f"/></g><g transform="translate(164.0,140.0)"><path transform="translate(0.0,-2.0) scale(1.00)" d="M-10,-5 C-10,-9.5 -4,-10 0,-9 C4,-8 8,-9.5 9,-5 C10,-1 5,0 2,0 C-1,0 -2,3 -5,2.5 C-9,2 -10,-1 -10,-5z" fill="#8cbf8c" stroke="#5b8f5b" stroke-width="1"/><ellipse cx="-4.5" cy="-7" rx="4" ry="2.6" fill="#f0f0f0" stroke="#5b8f5b" stroke-width=".8" transform="rotate(-10 -4.5 -7)"/><rect x="2.0" y="1.5" width="10.0" height="10.0" rx="1.6" fill="#d6bf2d" stroke="#b8a21c" stroke-width=".6"/><path d="M7.0,3.0 v7.0 M4.2,4.8 l5.6,3.4 M4.2,8.2 l5.6,-3.4" stroke="#fffde0" stroke-width="1.5" fill="none"/></g><g transform="translate(195.0,140.0)"><path transform="translate(0.0,-2.0) scale(1.00)" d="M-10,-5 C-10,-9.5 -4,-10 0,-9 C4,-8 8,-9.5 9,-5 C10,-1 5,0 2,0 C-1,0 -2,3 -5,2.5 C-9,2 -10,-1 -10,-5z" fill="#b9b9b9" stroke="#7d7d7d" stroke-width="1"/><path d="M-10,7 C-10,2 -6,0 -3.5,1.5 C-2,5 -5,9 -10,9.5z" fill="#8cbf8c" stroke="#5b8f5b" stroke-width=".9"/><rect x="2.0" y="1.5" width="10.0" height="10.0" rx="1.6" fill="#d6bf2d" stroke="#b8a21c" stroke-width=".6"/><path d="M7.0,3.0 v7.0 M4.2,4.8 l5.6,3.4 M4.2,8.2 l5.6,-3.4" stroke="#fffde0" stroke-width="1.5" fill="none"/></g><g transform="translate(226.0,140.0)"><path transform="translate(0.0,-2.0) scale(1.00)" d="M-10,-5 C-10,-9.5 -4,-10 0,-9 C4,-8 8,-9.5 9,-5 C10,-1 5,0 2,0 C-1,0 -2,3 -5,2.5 C-9,2 -10,-1 -10,-5z" fill="#8cbf8c" stroke="#5b8f5b" stroke-width="1"/><ellipse cx="-4" cy="-7" rx="4" ry="2.6" fill="#7fb07f" stroke="#5b7f8f" stroke-width=".8" transform="rotate(-10 -4 -7)"/><path d="M1,-9 C5,-9 8,-8 9,-5 C9.5,-2 6,-1.5 3,-1.6z" fill="#b9b9c9" opacity=".8"/><rect x="2.0" y="1.5" width="10.0" height="10.0" rx="1.6" fill="#d6bf2d" stroke="#b8a21c" stroke-width=".6"/><path d="M7.0,3.0 v7.0 M4.2,4.8 l5.6,3.4 M4.2,8.2 l5.6,-3.4" stroke="#fffde0" stroke-width="1.5" fill="none"/></g><g transform="translate(257.0,140.0)"><path transform="translate(0.0,-2.0) scale(1.00)" d="M-10,-5 C-10,-9.5 -4,-10 0,-9 C4,-8 8,-9.5 9,-5 C10,-1 5,0 2,0 C-1,0 -2,3 -5,2.5 C-9,2 -10,-1 -10,-5z" fill="#8cbf8c" stroke="#5b8f5b" stroke-width="1"/><ellipse cx="-4.5" cy="-7" rx="4" ry="2.6" fill="#f0f0f0" stroke="#5b8f5b" stroke-width=".8" transform="rotate(-10 -4.5 -7)"/><rect x="2.5" y="1.5" width="10.0" height="10.0" rx="1.6" fill="#e0555f"/><path d="M4.5,3.5 l6.0,6.0 M10.5,3.5 l-6.0,6.0" stroke="#fff" stroke-width="1.8" fill="none"/></g><g transform="translate(288.0,140.0)"><path transform="translate(0.0,-2.0) scale(1.00)" d="M-10,-5 C-10,-9.5 -4,-10 0,-9 C4,-8 8,-9.5 9,-5 C10,-1 5,0 2,0 C-1,0 -2,3 -5,2.5 C-9,2 -10,-1 -10,-5z" fill="#b9b9b9" stroke="#7d7d7d" stroke-width="1"/><path d="M-10,7 C-10,2 -6,0 -3.5,1.5 C-2,5 -5,9 -10,9.5z" fill="#8cbf8c" stroke="#5b8f5b" stroke-width=".9"/><rect x="2.5" y="1.5" width="10.0" height="10.0" rx="1.6" fill="#e0555f"/><path d="M4.5,3.5 l6.0,6.0 M10.5,3.5 l-6.0,6.0" stroke="#fff" stroke-width="1.8" fill="none"/></g><g transform="translate(319.0,140.0)"><path d="M-10,-6 C-9,-11 -2,-10 2,-9 C6,-8 10,-10 10.5,-5 C11,-1 5,-1 2,0 C-1,1.5 -2,9 -6,10 C-10,10 -10.5,-1 -10,-6z" fill="#7fb87f" stroke="#5b8f5b" stroke-width="1"/><path d="M-10,0 C-7,2 -3,1 -1,2 C-2,6 -3,9.5 -6,10 C-9.5,10 -10.2,4 -10,0z" fill="#d9c43a" stroke="#a6921c" stroke-width=".6"/></g><g transform="translate(350.0,140.0)"><path transform="rotate(-38)" d="M-11,0 C-11,-6 -5,-7 0,-5 C5,-7 11,-6 11,0 C11,6 5,7 0,5 C-5,7 -11,6 -11,0z" fill="#7fb87f" stroke="#cdb62a" stroke-width="3"/></g><g transform="translate(380.0,140.0)"><path d="M-9,-9 L-3,3 L2,-7 L9,-7" fill="none" stroke="#d9d9d9" stroke-width="1.2"/><circle cx="-9" cy="-9" r="1.5" fill="#f4f4f4" stroke="#d0d0d0" stroke-width=".8"/><circle cx="-3" cy="3" r="1.5" fill="#f4f4f4" stroke="#d0d0d0" stroke-width=".8"/><rect x="1.5" y="1.5" width="10" height="10" rx="1.8" fill="#e4e4e4" stroke="#d3d3d3" stroke-width=".6"/><circle cx="6.5" cy="6.5" r="2.6" fill="none" stroke="#f6f6f6" stroke-width="1.3"/></g><g transform="translate(411.0,140.0)"><path d="M-9,-1 H11" stroke="#aeb6be" stroke-width="1.3"/><path d="M0,-11 V7" stroke="#3f7a52" stroke-width="1.8"/><path d="M5.5,-1 V11.5" stroke="#3f6a5a" stroke-width="1.8"/><path d="M-1,9 L1.5,0" stroke="#e0707a" stroke-width="1"/><rect x="-1.6" y="-2.6" width="3.2" height="3.2" fill="#fff" stroke="#444" stroke-width=".7"/><rect x="4" y="-2.6" width="3.2" height="3.2" fill="#fff" stroke="#444" stroke-width=".7"/><rect x="5.8" y="-10.8" width="6.5" height="6.5" rx="1.6" fill="#d6bf2d" stroke="#b8a21c" stroke-width=".6"/><path d="M9.0,-9.2 v3.5 M6.2,-9.2 l5.6,3.4 M6.2,-5.8 l5.6,-3.4" stroke="#fffde0" stroke-width="1.5" fill="none"/><rect x="-9.2" y="4.2" width="6.5" height="6.5" rx="1.6" fill="#e0555f"/><path d="M-7.2,6.2 l2.5,2.5 M-4.8,6.2 l-2.5,2.5" stroke="#fff" stroke-width="1.8" fill="none"/></g><g transform="translate(442.0,140.0)"><path d="M-1,-9.5 C-7,-12 -11.5,-8 -10.5,-4 C-9.5,0 -4,0 -1,-1.5z" fill="#b9b9b9" stroke="#7d7d7d" stroke-width=".9"/><path d="M1,-9.5 C7,-12 11.5,-8 10.5,-4 C9.5,0 4,0 1,-1.5z" fill="#8cbf8c" stroke="#5b8f5b" stroke-width=".9"/><path d="M-2.5,-7 L3.5,6" stroke="#8a8f96" stroke-width="1.6"/><path d="M2.5,-7 L-3.5,6" stroke="#9a9fa6" stroke-width="1.6"/><ellipse cx="-4.5" cy="8" rx="2" ry="3.2" fill="none" stroke="#c4262e" stroke-width="1.5" transform="rotate(28 -4.5 8)"/><ellipse cx="4.5" cy="8" rx="2" ry="3.2" fill="none" stroke="#c4262e" stroke-width="1.5" transform="rotate(-28 4.5 8)"/></g><g transform="translate(473.0,140.0)"><path d="M-1,-9.5 C-7,-12 -11.5,-8 -10.5,-4 C-9.5,0 -4,0 -1,-1.5z" fill="#8cbf8c" stroke="#5b8f5b" stroke-width=".9"/><path d="M1,-9.5 C7,-12 11.5,-8 10.5,-4 C9.5,0 4,0 1,-1.5z" fill="#8cbf8c" stroke="#5b8f5b" stroke-width=".9"/><path d="M-2.5,-7 L3.5,6" stroke="#8a8f96" stroke-width="1.6"/><path d="M2.5,-7 L-3.5,6" stroke="#9a9fa6" stroke-width="1.6"/><ellipse cx="-4.5" cy="8" rx="2" ry="3.2" fill="none" stroke="#c4262e" stroke-width="1.5" transform="rotate(28 -4.5 8)"/><ellipse cx="4.5" cy="8" rx="2" ry="3.2" fill="none" stroke="#c4262e" stroke-width="1.5" transform="rotate(-28 4.5 8)"/></g><g transform="translate(504.0,140.0)"><path d="M-1,-9 C-7,-11 -11,-8 -10,-4 C-9,0 -4,0 -1,-2z M1,-9 C7,-11 11,-8 10,-4 C9,0 4,0 1,-2z" fill="#dcdcdc" stroke="#d0d0d0" stroke-width=".8"/><path d="M-4,-6 h9 M-4,-3.5 h9" stroke="#e9e9e9" stroke-width="1"/><path d="M-6,-1 C-5,4 -2,6 1,7" stroke="#d9d9d9" stroke-width="1" fill="none"/></g><g transform="translate(535.0,140.0)"><path d="M-10,-8 h20 M-10,-4 h20 M-10,0 h20 M-10,4 h20 M-10,8 h20" stroke="#dcdcdc" stroke-width="1" stroke-dasharray="5,1.5"/><path d="M0,-10 V10" stroke="#dadada" stroke-width="1.2"/><path d="M-3,-6 h6 M-3,2 h6" stroke="#d0d0d0" stroke-width="1.4"/></g><g transform="translate(567.0,140.0)"><path d="M-6,8 A8,8 0 0,1 -4,-6" fill="none" stroke="#d6d6d6" stroke-width="1.2"/><path d="M-1,-9 L9,-4 L-1,1z" fill="#e6e6e6" stroke="#d2d2d2" stroke-width=".8"/><path d="M-1,-9 V4 L3,9 H-5z" fill="#ededed" stroke="#d6d6d6" stroke-width=".8"/></g><path d="M586.0,135.0 h8 l-4,4.5z" fill="#555"/>
<g transform="translate(25.0,174.0)"><rect x="-10" y="-10" width="20" height="20" fill="#cfe6c4"/><path d="M-10,-2 C-4,-8 4,-4 10,-8 V2 C4,4 -2,0 -10,6z" fill="#b6dba8"/><path d="M-6,-6 C-2,-3 2,-7 6,-3 M-8,4 C-3,2 3,6 8,3" stroke="#e8efe0" stroke-width="1" fill="none"/><circle cx="-1" cy="0" r="3.5" fill="none" stroke="#9fc3dc" stroke-width="1"/><path d="M3,6 l8,-5 l-2,9 l-2,-3z" fill="#4c9a3c" stroke="#2f6a24" stroke-width=".5"/></g><g transform="translate(56.0,174.0)"><rect x="-10" y="-9" width="19" height="19" fill="#f2e6a8"/><path d="M-10,2 l6,-5 l5,4 l8,-6 V10 H-10z" fill="#7fb2e4"/><path d="M-10,-9 h7 v6 h-7z" fill="#5cb85c"/><path d="M-3,8 l6,-3 l4,5z" fill="#3f78c4"/><path d="M-2,4 L9,-10" stroke="#7a4420" stroke-width="3" stroke-linecap="round"/><path d="M-5,8 C-5,4 -2,3 0,4 C0,7 -2,9 -5,8z" fill="#e8a53a" stroke="#a8701c" stroke-width=".5"/></g><g transform="translate(100.0,174.0)"><rect x="-5.5" y="2.500" width="11.500" height="8.500" rx="1" fill="#000"/><rect x="-2" y="1" width="4.500" height="2.500" fill="#000"/><circle cx="0.300" cy="6.800" r="2.700" fill="none" stroke="#fff" stroke-width="1"/><circle cx="0.300" cy="6.800" r="1" fill="#fff"/><path d="M0.300,-1.500 V-6.500" stroke="#000" stroke-width="1.700"/><path d="M-2.900,-5.200 L0.300,-9 L3.500,-5.200z" fill="#000"/></g><g transform="translate(131.0,174.0)"><rect x="-9.500" y="-9.5" width="16" height="13" fill="#fff" stroke="#111" stroke-width="2.2" stroke-dasharray="3.2,1.8"/><path d="M-7,2 l4,-5 l3,3 l2,-2 l3,4z" fill="#3c3c3c"/><circle cx="2.5" cy="-5.5" r="1.3" fill="#3c3c3c"/><path d="M2.5,-1.5 L2.5,9.5 L5.2,7.2 L7.2,11.4 L9,10.5 L7,6.4 L10.4,6.2z" fill="#fff" stroke="#111" stroke-width="1"/></g>
<g transform="translate(15.0,217.0)"><path d="M-9.5,-8.5 L-3,7 L2,-8.5 L9,-8.5" fill="none" stroke="#444" stroke-width="1.2"/><circle cx="-9.5" cy="-8.5" r="1.5" fill="#fff" stroke="#444" stroke-width=".8"/><circle cx="2" cy="-8.5" r="1.5" fill="#fff" stroke="#444" stroke-width=".8"/><circle cx="9" cy="-8.5" r="1.5" fill="#fff" stroke="#444" stroke-width=".8"/><circle cx="-3" cy="7" r="1.6" fill="#fff" stroke="#444" stroke-width=".8"/><rect x="3.2" y="2.8" width="8.5" height="8.5" rx="1.6" fill="#6fa86f" stroke="#4e8a4e" stroke-width=".6"/><path d="M7.5,4.3 v5.3 M4.8,7.0 h5.3" stroke="#fff" stroke-width="2" fill="none"/></g><g transform="translate(15.0,247.0)"><rect x="-11.0" y="-10.0" width="6" height="6" fill="#2d4f7c"/><rect x="-5.0" y="-10.0" width="6" height="6" fill="#9db7d6"/><rect x="1.0" y="-10.0" width="6" height="6" fill="#2d4f7c"/><rect x="-11.0" y="-4.0" width="6" height="6" fill="#9db7d6"/><rect x="-5.0" y="-4.0" width="6" height="6" fill="#2d4f7c"/><rect x="1.0" y="-4.0" width="6" height="6" fill="#9db7d6"/><rect x="-11.0" y="2.0" width="6" height="6" fill="#5d82b0"/><rect x="-5.0" y="2.0" width="6" height="6" fill="#9db7d6"/><rect x="1.0" y="2.0" width="6" height="6" fill="#2d4f7c"/><rect x="3.2" y="3.2" width="8.5" height="8.5" rx="1.6" fill="#6fa86f" stroke="#4e8a4e" stroke-width=".6"/><path d="M7.5,4.8 v5.3 M4.8,7.5 h5.3" stroke="#fff" stroke-width="2" fill="none"/></g><g transform="translate(15.0,278.0)"><rect x="-11" y="-10" width="18" height="19" fill="#a9bfdc" stroke="#2d4f7c" stroke-width="1.1"/><path d="M-11,-1 h18 M-2,-10 v19 M-11,-10 L-2,-1 M-2,-10 L-11,-1 M-6.5,-1 v10" stroke="#2d4f7c" stroke-width="1"/><rect x="3.2" y="3.2" width="8.5" height="8.5" rx="1.6" fill="#6fa86f" stroke="#4e8a4e" stroke-width=".6"/><path d="M7.5,4.8 v5.3 M4.8,7.5 h5.3" stroke="#fff" stroke-width="2" fill="none"/></g><g transform="translate(15.0,309.0)"><path d="M-5,-10.5 a5,5 0 1,1 -2.500,9.300 C-4.500,0 -4,4 -10.500,6.800 C-6,2.500 -7,-0.500 -8.800,-2.500 C-11,-5.500 -9,-10.500 -5,-10.500z" fill="#2f5f9a"/><rect x="3.2" y="3.2" width="8.5" height="8.5" rx="1.6" fill="#6fa86f" stroke="#4e8a4e" stroke-width=".6"/><path d="M7.5,4.8 v5.3 M4.8,7.5 h5.3" stroke="#fff" stroke-width="2" fill="none"/></g><g transform="translate(15.0,338.0)"><path d="M-11,11 C-8,2 -2,-7 10,-11 C9,-3 3,3 -7,5z" fill="#7fa6d2" stroke="#35597f" stroke-width=".9"/><path d="M-11,11 C-6,2 0,-4 7,-8" fill="none" stroke="#35597f" stroke-width=".8"/><rect x="3.2" y="3.2" width="8.5" height="8.5" rx="1.6" fill="#6fa86f" stroke="#4e8a4e" stroke-width=".6"/><path d="M7.5,4.8 v5.3 M4.8,7.5 h5.3" stroke="#fff" stroke-width="2" fill="none"/></g><g transform="translate(15.0,368.0)"><rect x="-11" y="-10.5" width="20" height="20" rx="1.5" fill="#a9bcd6" stroke="#4a6a92" stroke-width="1.1"/><path d="M-9,-9 L-3.5,5.5 L2,-9 L7.5,-9" fill="none" stroke="#3c5a80" stroke-width="1.2"/><circle cx="-3.500" cy="5.5" r="1.6" fill="#fff" stroke="#3c5a80" stroke-width=".8"/><rect x="3.2" y="3.2" width="8.5" height="8.5" rx="1.6" fill="#6fa86f" stroke="#4e8a4e" stroke-width=".6"/><path d="M7.5,4.8 v5.3 M4.8,7.5 h5.3" stroke="#fff" stroke-width="2" fill="none"/></g><g transform="translate(15.0,398.0)"><path d="M-10,-5 C-10,-11 -3,-11.5 0,-9 C3,-11 9,-9 7.5,-3 C7,0 5,2 5,5 C5,8 2,8 2,5 V2 C-1,4 -4,3 -5,1 C-6,4 -9,0 -10,-5z" fill="#3f6ea8" stroke="#26466e" stroke-width=".7"/><circle cx="-3" cy="-5" r="1" fill="#fff"/><path d="M2,2 C2,-2 4,-4 4.5,-7" stroke="#c9d8ea" stroke-width=".8" fill="none"/><rect x="3.2" y="3.2" width="8.5" height="8.5" rx="1.6" fill="#6fa86f" stroke="#4e8a4e" stroke-width=".6"/><path d="M7.5,4.8 v5.3 M4.8,7.5 h5.3" stroke="#fff" stroke-width="2" fill="none"/></g><path d="M34.0,396.0 h8 l-4,4.5z" fill="#000"/><g transform="translate(15.0,428.0)"><g transform="translate(-1.0,-1.0)"><ellipse rx="10.0" ry="8.5" fill="#7fb0e6" stroke="#4f7fb4" stroke-width=".8"/><ellipse rx="4.5" ry="8.5" fill="none" stroke="#dfeaf6" stroke-width="1"/><path d="M-10.0,0 H10.0 M0,-8.5 V8.5" stroke="#dfeaf6" stroke-width="1"/><path d="M-6,-4 l3,-1 l1,3 l-2,3 l-2,-1z M2,-5 l4,1 l1,4 l-3,2 l-2,-3z M-1,3 l3,1 l-1,3 l-2,-1z" fill="#6b7d6a" opacity=".75"/></g><rect x="3.2" y="3.2" width="8.5" height="8.5" rx="1.6" fill="#6fa86f" stroke="#4e8a4e" stroke-width=".6"/><path d="M7.5,4.8 v5.3 M4.8,7.5 h5.3" stroke="#fff" stroke-width="2" fill="none"/></g><path d="M34.0,426.0 h8 l-4,4.5z" fill="#000"/><g transform="translate(15.0,458.0)"><g transform="translate(-1,-1)"><ellipse rx="10.5" ry="9.5" fill="#2f5688"/><ellipse rx="10.5" ry="9.5" fill="none" stroke="#1d3a60" stroke-width=".8"/><ellipse rx="4.8" ry="9.5" fill="none" stroke="#e9f0f8" stroke-width="1.3"/><path d="M-10.5,0 h21 M-9,-5 h18 M-9,5 h18 M0,-9.5 v19" stroke="#e9f0f8" stroke-width="1.3"/></g><rect x="3.2" y="3.2" width="8.5" height="8.5" rx="1.6" fill="#6fa86f" stroke="#4e8a4e" stroke-width=".6"/><path d="M7.5,4.8 v5.3 M4.8,7.5 h5.3" stroke="#fff" stroke-width="2" fill="none"/></g><g transform="translate(15.0,488.0)"><g transform="translate(-1,-1)"><ellipse rx="10.5" ry="9.5" fill="#eef3f9" stroke="#5a82b4" stroke-width="1"/><ellipse rx="4.8" ry="9.5" fill="none" stroke="#9db7d6" stroke-width=".8"/><path d="M-10.5,0 h21" stroke="#9db7d6" stroke-width=".8"/><path d="M-7,-5 L-1.5,5 L2.5,-5 L7,-5" fill="none" stroke="#333" stroke-width="1.1"/><circle cx="-7" cy="-5" r="1.3" fill="#fff" stroke="#333" stroke-width=".7"/><circle cx="-1.500" cy="5" r="1.3" fill="#fff" stroke="#333" stroke-width=".7"/><circle cx="2.500" cy="-5" r="1.3" fill="#fff" stroke="#333" stroke-width=".7"/></g><rect x="3.2" y="3.2" width="8.5" height="8.5" rx="1.6" fill="#6fa86f" stroke="#4e8a4e" stroke-width=".6"/><path d="M7.5,4.8 v5.3 M4.8,7.5 h5.3" stroke="#fff" stroke-width="2" fill="none"/></g><path d="M34.0,486.0 h8 l-4,4.5z" fill="#000"/><g transform="translate(15.0,518.0)"><path d="M-9.5,-8.5 L-3,7 L2,-8.5 L9,-8.5" fill="none" stroke="#444" stroke-width="1.2"/><circle cx="-9.5" cy="-8.5" r="1.5" fill="#fff" stroke="#444" stroke-width=".8"/><circle cx="2" cy="-8.5" r="1.5" fill="#fff" stroke="#444" stroke-width=".8"/><circle cx="9" cy="-8.5" r="1.5" fill="#fff" stroke="#444" stroke-width=".8"/><circle cx="-3" cy="7" r="1.6" fill="#fff" stroke="#444" stroke-width=".8"/><rect x="2.8" y="3.2" width="8.5" height="8.5" rx="1.6" fill="#d6bf2d" stroke="#b8a21c" stroke-width=".6"/><path d="M7.0,4.8 v5.5 M4.2,5.8 l5.6,3.4 M4.2,9.2 l5.6,-3.4" stroke="#fffde0" stroke-width="1.5" fill="none"/></g><path d="M34.0,516.0 h8 l-4,4.5z" fill="#000"/><g transform="translate(22.0,549.0)"><rect x="-9" y="-10" width="19" height="19" rx="1.5" fill="#4a78b0" stroke="#2f5688" stroke-width=".8"/><path d="M-9,-5.5 h19 M-9,-1 h19 M-9,3.500 h19 M-4,-10 v19 M1,-10 v19 M6,-10 v19" stroke="#dfe8f3" stroke-width="1"/><rect x="4.2" y="3.8" width="8.5" height="8.5" rx="1.6" fill="#6fa86f" stroke="#4e8a4e" stroke-width=".6"/><path d="M8.5,5.3 v5.3 M5.8,8.0 h5.3" stroke="#fff" stroke-width="2" fill="none"/></g>
<g transform="translate(431,207)"><rect x="-3.5" y="-7" width="11" height="9" fill="#d9d9d9" stroke="#333" stroke-width="1.6"/><path d="M-3.500,-6 h11" stroke="#333" stroke-width="2.600"/><rect x="-7" y="-2.5" width="10.500" height="9.500" fill="#d9d9d9" stroke="#333" stroke-width="1.600"/><path d="M-7,-1.6 h10.500" stroke="#333" stroke-width="2.400"/></g><path d="M451,201 l12,12 M463,201 l-12,12" stroke="#333" stroke-width="2.800"/><g transform="translate(1878,207)"><rect x="-3.5" y="-7" width="11" height="9" fill="#d9d9d9" stroke="#333" stroke-width="1.6"/><path d="M-3.500,-6 h11" stroke="#333" stroke-width="2.600"/><rect x="-7" y="-2.5" width="10.500" height="9.500" fill="#d9d9d9" stroke="#333" stroke-width="1.600"/><path d="M-7,-1.6 h10.500" stroke="#333" stroke-width="2.400"/></g><path d="M1898,201 l12,12 M1910,201 l-12,12" stroke="#333" stroke-width="2.800"/><g transform="translate(61.0,238.0)"><path d="M-6,3 L3,-5 L6,-2 L-2,6z" fill="#e8a53a" stroke="#b3761c" stroke-width=".6"/><path d="M2,-6.500 l5,5" stroke="#7a4420" stroke-width="2.200"/><path d="M-7,3 l3,4 M-5,1.500 l3.500,4.500" stroke="#e8d66a" stroke-width="1.200"/></g><g transform="translate(84.0,238.0)"><g fill="#fff" stroke="#8a8a8a" stroke-width="1"><rect x="-6.5" y="-1" width="7.500" height="7.500"/><rect x="-4.500" y="-3.500" width="8" height="8.500"/><path d="M-1,-7 v8 a1.600,1.600 0 0,0 3.200,0 v-6" fill="none"/></g><rect x="1.5" y="1.5" width="6.0" height="6.0" rx="1.6" fill="#6fa86f" stroke="#4e8a4e" stroke-width=".6"/><path d="M4.5,3.1 v2.8 M3.1,4.5 h2.8" stroke="#fff" stroke-width="2" fill="none"/></g><g transform="translate(107.0,238.0)"><path d="M-8,0 C-4,-5.500 4,-5.500 8,0 C4,5 -4,5 -8,0z" fill="#f4f4f4" stroke="#8a8f96" stroke-width=".9"/><circle cx="0" cy="-.3" r="2.800" fill="#9aa3ad"/><circle cx="0" cy="-.3" r="1.200" fill="#444"/><path d="M1.5,4.5 h8 l-4,4.5z" fill="#222"/></g><g transform="translate(130.0,238.0)"><path d="M-7,-7 H7 L1.800,0 V7 L-1.800,5 V0z" fill="#5d8cc4" stroke="#3f6b9d" stroke-width=".7"/><path d="M-7,-7 H7 V-5 H-7z" fill="#c9d65a"/></g><g transform="translate(153.0,238.0)"><text x="-3" y="3" font-size="13" fill="#6a4a8a" text-anchor="middle" style="font-family:'Liberation Serif',serif">ε</text><path d="M1,2 h6 l-2,2.500 v3 h-2 v-3z" fill="#c4c4c4" stroke="#9a9a9a" stroke-width=".5"/></g><path d="M168.0,237.0 h8 l-4,4.5z" fill="#000"/><g transform="translate(192.0,238.0)"><path d="M-7,-6 v11 M-7,-3 h4 M-7,3 h4" stroke="#c9a21e" stroke-width="1"/><rect x="-4" y="-4.500" width="3" height="3" fill="#f2b84a" stroke="#c98a1c" stroke-width=".5"/><rect x="-4" y="1.500" width="3" height="3" fill="#f2b84a" stroke="#c98a1c" stroke-width=".5"/><path d="M3,-7 v8 h-3.500 l5,6 l5,-6 h-3.500 v-8z" fill="#4f7db2" stroke="#2f5688" stroke-width=".6"/></g><g transform="translate(215.0,238.0)"><path d="M-7,-6 v11 M-7,-3 h4 M-7,3 h4" stroke="#c9a21e" stroke-width="1"/><rect x="-4" y="-4.500" width="3" height="3" fill="#f2b84a" stroke="#c98a1c" stroke-width=".5"/><rect x="-4" y="1.500" width="3" height="3" fill="#f2b84a" stroke="#c98a1c" stroke-width=".5"/><path d="M3,7 v-8 h-3.500 l5,-6 l5,6 h-3.500 v8z" fill="#4f7db2" stroke="#2f5688" stroke-width=".6"/></g><g transform="translate(237.0,238.0)"><rect x="-7" y="-6" width="11" height="10" fill="#fff" stroke="#8a8a8a" stroke-width="1"/><rect x="1.500" y="2" width="6" height="6" rx="1.200" fill="#e0555f"/><path d="M3,5 h3" stroke="#fff" stroke-width="1.300"/></g><g transform="translate(1683.0,238.0)"><rect x="-6.500" y="-6.500" width="10.500" height="10.500" fill="#fff" stroke="#8a8a8a" stroke-width="1"/><circle cx="4.500" cy="4.500" r="2.600" fill="#8cc08c" stroke="#5b8f5b" stroke-width=".9"/></g><g transform="translate(1706.0,238.0)"><g transform="scale(.72)"><path d="M-9.5,-1.5 A9.5,9 0 0,1 6,-7.5 L8,-10 L9.5,-2 L1.5,-3 L4,-5.2 A6,5.6 0 0,0 -5.2,-1.2z" fill="#4f8fd6" stroke="#3573b9" stroke-width=".6"/><path d="M9.5,1.5 A9.5,9 0 0,1 -6,7.5 L-8,10 L-9.5,2 L-1.5,3 L-4,5.2 A6,5.6 0 0,0 5.2,1.2z" fill="#4f8fd6" stroke="#3573b9" stroke-width=".6"/></g></g><g transform="translate(1729.0,238.0)"><path d="M-7,-7 H7 L1.800,0 V7 L-1.800,5 V0z" fill="#5d8cc4" stroke="#3f6b9d" stroke-width=".7"/><path d="M-7,-7 H7 V-5 H-7z" fill="#c9d65a"/></g><g transform="translate(1752.0,238.0)"><path d="M-7,-6 v11 M-7,-3 h4 M-7,3 h4" stroke="#c9a21e" stroke-width="1"/><rect x="-4" y="-4.500" width="3" height="3" fill="#f2b84a" stroke="#c98a1c" stroke-width=".5"/><rect x="-4" y="1.500" width="3" height="3" fill="#f2b84a" stroke="#c98a1c" stroke-width=".5"/><path d="M3,7 v-8 h-3.500 l5,-6 l5,6 h-3.500 v8z" fill="#4f7db2" stroke="#2f5688" stroke-width=".6"/></g><g transform="translate(1776.0,238.0)"><circle r="6.800" fill="#6d97c4" stroke="#9db9d8" stroke-width=".8"/><text x="0" y="4" font-size="11" font-weight="bold" font-style="italic" fill="#fff" text-anchor="middle" style="font-family:'Liberation Serif',serif">i</text></g><g clip-path="url(#lclip)"><rect x="78.0" y="257.3" width="14" height="14" fill="#fff" stroke="#333" stroke-width="1"/><path d="M80.5,264.4 l3.2,3.4 l6,-7" fill="none" stroke="#222" stroke-width="1.25"/><circle cx="109.0" cy="264.3" r="7" fill="#fff" stroke="#000" stroke-width="1.100"/><circle cx="109.0" cy="264.3" r="2.300" fill="#000"/><path d="M58.7,283.3 l4.6,5 l-4.6,5" fill="none" stroke="#a6a6a6" stroke-width="1.5"/><rect x="78.0" y="281.3" width="14" height="14" fill="#fff" stroke="#333" stroke-width="1"/><path d="M80.5,288.4 l3.2,3.4 l6,-7" fill="none" stroke="#222" stroke-width="1.25"/><g transform="translate(109.0,288.3)" fill="none" stroke="#8e8e8e" stroke-width="1.100"><rect x="-7.5" y="-1.5" width="9" height="9" stroke="#bdbdbd"/><rect x="-5" y="-4" width="10" height="10" fill="#fff" stroke="#a4a4a4"/><rect x="-2.5" y="-6.5" width="10" height="11" fill="#fff"/><path d="M.5,-9 v9.500 a2,2 0 0,0 4,0 v-7" stroke="#7a7a7a" stroke-width="1.300"/></g><path d="M58.7,307.3 l4.6,5 l-4.6,5" fill="none" stroke="#a6a6a6" stroke-width="1.5"/><rect x="78.0" y="305.3" width="14" height="14" fill="#fff" stroke="#333" stroke-width="1"/><g transform="translate(109.0,312.3)"><rect x="-8.0" y="-8.0" width="5.4" height="5.4" fill="#2d4f7c"/><rect x="-2.6" y="-8.0" width="5.4" height="5.4" fill="#c9d8ea"/><rect x="2.8" y="-8.0" width="5.4" height="5.4" fill="#2d4f7c"/><rect x="-8.0" y="-2.6" width="5.4" height="5.4" fill="#c9d8ea"/><rect x="-2.6" y="-2.6" width="5.4" height="5.4" fill="#2d4f7c"/><rect x="2.8" y="-2.6" width="5.4" height="5.4" fill="#c9d8ea"/><rect x="-8.0" y="2.8" width="5.4" height="5.4" fill="#6a8cb8"/><rect x="-2.6" y="2.8" width="5.4" height="5.4" fill="#c9d8ea"/><rect x="2.8" y="2.8" width="5.4" height="5.4" fill="#9db7d6"/></g><path d="M58.7,331.3 l4.6,5 l-4.6,5" fill="none" stroke="#a6a6a6" stroke-width="1.5"/><rect x="78.0" y="329.3" width="14" height="14" fill="#fff" stroke="#333" stroke-width="1"/><g transform="translate(109.0,336.3)"><rect x="-8.0" y="-8.0" width="5.4" height="5.4" fill="#2d4f7c"/><rect x="-2.6" y="-8.0" width="5.4" height="5.4" fill="#c9d8ea"/><rect x="2.8" y="-8.0" width="5.4" height="5.4" fill="#2d4f7c"/><rect x="-8.0" y="-2.6" width="5.4" height="5.4" fill="#c9d8ea"/><rect x="-2.6" y="-2.6" width="5.4" height="5.4" fill="#2d4f7c"/><rect x="2.8" y="-2.6" width="5.4" height="5.4" fill="#c9d8ea"/><rect x="-8.0" y="2.8" width="5.4" height="5.4" fill="#6a8cb8"/><rect x="-2.6" y="2.8" width="5.4" height="5.4" fill="#c9d8ea"/><rect x="2.8" y="2.8" width="5.4" height="5.4" fill="#9db7d6"/></g><path d="M56.0,357.7 l5,4.8 l5,-4.8" fill="none" stroke="#3c3c3c" stroke-width="1.7"/><rect x="78.0" y="353.3" width="14" height="14" fill="#fff" stroke="#333" stroke-width="1"/><path d="M80.5,360.4 l3.2,3.4 l6,-7" fill="none" stroke="#222" stroke-width="1.25"/><g transform="translate(109.0,360.3)" fill="none" stroke="#8e8e8e" stroke-width="1.100"><rect x="-7.5" y="-1.5" width="9" height="9" stroke="#bdbdbd"/><rect x="-5" y="-4" width="10" height="10" fill="#fff" stroke="#a4a4a4"/><rect x="-2.5" y="-6.5" width="10" height="11" fill="#fff"/><path d="M.5,-9 v9.500 a2,2 0 0,0 4,0 v-7" stroke="#7a7a7a" stroke-width="1.300"/></g><path d="M84.2,379.3 l4.6,5 l-4.6,5" fill="none" stroke="#a6a6a6" stroke-width="1.5"/><rect x="103.0" y="377.3" width="14" height="14" fill="#fff" stroke="#333" stroke-width="1"/><path d="M105.5,384.4 l3.2,3.4 l6,-7" fill="none" stroke="#222" stroke-width="1.25"/><g transform="translate(134.0,384.3)" fill="none" stroke="#8e8e8e" stroke-width="1.100"><rect x="-7.5" y="-1.5" width="9" height="9" stroke="#bdbdbd"/><rect x="-5" y="-4" width="10" height="10" fill="#fff" stroke="#a4a4a4"/><rect x="-2.5" y="-6.5" width="10" height="11" fill="#fff"/><path d="M.5,-9 v9.500 a2,2 0 0,0 4,0 v-7" stroke="#7a7a7a" stroke-width="1.300"/></g><path d="M84.2,403.3 l4.6,5 l-4.6,5" fill="none" stroke="#a6a6a6" stroke-width="1.5"/><rect x="103.0" y="401.3" width="14" height="14" fill="#fff" stroke="#333" stroke-width="1"/><path d="M105.5,408.4 l3.2,3.4 l6,-7" fill="none" stroke="#222" stroke-width="1.25"/><g transform="translate(134.0,408.3)" fill="none" stroke="#8e8e8e" stroke-width="1.100"><rect x="-7.5" y="-1.5" width="9" height="9" stroke="#bdbdbd"/><rect x="-5" y="-4" width="10" height="10" fill="#fff" stroke="#a4a4a4"/><rect x="-2.5" y="-6.5" width="10" height="11" fill="#fff"/><path d="M.5,-9 v9.500 a2,2 0 0,0 4,0 v-7" stroke="#7a7a7a" stroke-width="1.300"/></g><path d="M84.2,427.3 l4.6,5 l-4.6,5" fill="none" stroke="#a6a6a6" stroke-width="1.5"/><rect x="103.0" y="425.3" width="14" height="14" fill="#fff" stroke="#333" stroke-width="1"/><path d="M105.5,432.4 l3.2,3.4 l6,-7" fill="none" stroke="#222" stroke-width="1.25"/><g transform="translate(134.0,432.3)" fill="none" stroke="#8e8e8e" stroke-width="1.100"><rect x="-7.5" y="-1.5" width="9" height="9" stroke="#bdbdbd"/><rect x="-5" y="-4" width="10" height="10" fill="#fff" stroke="#a4a4a4"/><rect x="-2.5" y="-6.5" width="10" height="11" fill="#fff"/><path d="M.5,-9 v9.500 a2,2 0 0,0 4,0 v-7" stroke="#7a7a7a" stroke-width="1.300"/></g><path d="M84.2,451.3 l4.6,5 l-4.6,5" fill="none" stroke="#a6a6a6" stroke-width="1.5"/><rect x="103.0" y="449.3" width="14" height="14" fill="#fff" stroke="#333" stroke-width="1"/><path d="M105.5,456.4 l3.2,3.4 l6,-7" fill="none" stroke="#222" stroke-width="1.25"/><g transform="translate(134.0,456.3)" fill="none" stroke="#8e8e8e" stroke-width="1.100"><rect x="-7.5" y="-1.5" width="9" height="9" stroke="#bdbdbd"/><rect x="-5" y="-4" width="10" height="10" fill="#fff" stroke="#a4a4a4"/><rect x="-2.5" y="-6.5" width="10" height="11" fill="#fff"/><path d="M.5,-9 v9.500 a2,2 0 0,0 4,0 v-7" stroke="#7a7a7a" stroke-width="1.300"/></g><path d="M84.2,475.3 l4.6,5 l-4.6,5" fill="none" stroke="#a6a6a6" stroke-width="1.5"/><rect x="103.0" y="473.3" width="14" height="14" fill="#fff" stroke="#333" stroke-width="1"/><path d="M105.5,480.4 l3.2,3.4 l6,-7" fill="none" stroke="#222" stroke-width="1.25"/><g transform="translate(134.0,480.3)" fill="none" stroke="#8e8e8e" stroke-width="1.100"><rect x="-7.5" y="-1.5" width="9" height="9" stroke="#bdbdbd"/><rect x="-5" y="-4" width="10" height="10" fill="#fff" stroke="#a4a4a4"/><rect x="-2.5" y="-6.5" width="10" height="11" fill="#fff"/><path d="M.5,-9 v9.500 a2,2 0 0,0 4,0 v-7" stroke="#7a7a7a" stroke-width="1.300"/></g><path d="M84.2,499.3 l4.6,5 l-4.6,5" fill="none" stroke="#a6a6a6" stroke-width="1.5"/><rect x="103.0" y="497.3" width="14" height="14" fill="#fff" stroke="#333" stroke-width="1"/><path d="M105.5,504.4 l3.2,3.4 l6,-7" fill="none" stroke="#222" stroke-width="1.25"/><g transform="translate(134.0,504.3)" fill="none" stroke="#8e8e8e" stroke-width="1.100"><rect x="-7.5" y="-1.5" width="9" height="9" stroke="#bdbdbd"/><rect x="-5" y="-4" width="10" height="10" fill="#fff" stroke="#a4a4a4"/><rect x="-2.5" y="-6.5" width="10" height="11" fill="#fff"/><path d="M.5,-9 v9.500 a2,2 0 0,0 4,0 v-7" stroke="#7a7a7a" stroke-width="1.300"/></g><path d="M84.2,523.3 l4.6,5 l-4.6,5" fill="none" stroke="#a6a6a6" stroke-width="1.5"/><rect x="103.0" y="521.3" width="14" height="14" fill="#fff" stroke="#333" stroke-width="1"/><path d="M105.5,528.4 l3.2,3.4 l6,-7" fill="none" stroke="#222" stroke-width="1.25"/><g transform="translate(134.0,528.3)" fill="none" stroke="#8e8e8e" stroke-width="1.100"><rect x="-7.5" y="-1.5" width="9" height="9" stroke="#bdbdbd"/><rect x="-5" y="-4" width="10" height="10" fill="#fff" stroke="#a4a4a4"/><rect x="-2.5" y="-6.5" width="10" height="11" fill="#fff"/><path d="M.5,-9 v9.500 a2,2 0 0,0 4,0 v-7" stroke="#7a7a7a" stroke-width="1.300"/></g><path d="M84.2,547.3 l4.6,5 l-4.6,5" fill="none" stroke="#a6a6a6" stroke-width="1.5"/><rect x="103.0" y="545.3" width="14" height="14" fill="#fff" stroke="#333" stroke-width="1"/><path d="M105.5,552.4 l3.2,3.4 l6,-7" fill="none" stroke="#222" stroke-width="1.25"/><g transform="translate(134.0,552.3)" fill="none" stroke="#8e8e8e" stroke-width="1.100"><rect x="-7.5" y="-1.5" width="9" height="9" stroke="#bdbdbd"/><rect x="-5" y="-4" width="10" height="10" fill="#fff" stroke="#a4a4a4"/><rect x="-2.5" y="-6.5" width="10" height="11" fill="#fff"/><path d="M.5,-9 v9.500 a2,2 0 0,0 4,0 v-7" stroke="#7a7a7a" stroke-width="1.300"/></g><path d="M84.2,571.3 l4.6,5 l-4.6,5" fill="none" stroke="#a6a6a6" stroke-width="1.5"/><rect x="103.0" y="569.3" width="14" height="14" fill="#fff" stroke="#333" stroke-width="1"/><path d="M105.5,576.4 l3.2,3.4 l6,-7" fill="none" stroke="#222" stroke-width="1.25"/><g transform="translate(134.0,576.3)" fill="none" stroke="#8e8e8e" stroke-width="1.100"><rect x="-7.5" y="-1.5" width="9" height="9" stroke="#bdbdbd"/><rect x="-5" y="-4" width="10" height="10" fill="#fff" stroke="#a4a4a4"/><rect x="-2.5" y="-6.5" width="10" height="11" fill="#fff"/><path d="M.5,-9 v9.500 a2,2 0 0,0 4,0 v-7" stroke="#7a7a7a" stroke-width="1.300"/></g><path d="M84.2,595.3 l4.6,5 l-4.6,5" fill="none" stroke="#a6a6a6" stroke-width="1.5"/><rect x="103.0" y="593.3" width="14" height="14" fill="#fff" stroke="#333" stroke-width="1"/><path d="M105.5,600.4 l3.2,3.4 l6,-7" fill="none" stroke="#222" stroke-width="1.25"/><g transform="translate(134.0,600.3)" fill="none" stroke="#8e8e8e" stroke-width="1.100"><rect x="-7.5" y="-1.5" width="9" height="9" stroke="#bdbdbd"/><rect x="-5" y="-4" width="10" height="10" fill="#fff" stroke="#a4a4a4"/><rect x="-2.5" y="-6.5" width="10" height="11" fill="#fff"/><path d="M.5,-9 v9.500 a2,2 0 0,0 4,0 v-7" stroke="#7a7a7a" stroke-width="1.300"/></g><path d="M84.2,619.3 l4.6,5 l-4.6,5" fill="none" stroke="#a6a6a6" stroke-width="1.5"/><rect x="103.0" y="617.3" width="14" height="14" fill="#fff" stroke="#333" stroke-width="1"/><path d="M105.5,624.4 l3.2,3.4 l6,-7" fill="none" stroke="#222" stroke-width="1.25"/><g transform="translate(134.0,624.3)" fill="none" stroke="#8e8e8e" stroke-width="1.100"><rect x="-7.5" y="-1.5" width="9" height="9" stroke="#bdbdbd"/><rect x="-5" y="-4" width="10" height="10" fill="#fff" stroke="#a4a4a4"/><rect x="-2.5" y="-6.5" width="10" height="11" fill="#fff"/><path d="M.5,-9 v9.500 a2,2 0 0,0 4,0 v-7" stroke="#7a7a7a" stroke-width="1.300"/></g><path d="M81.5,645.7 l5,4.8 l5,-4.8" fill="none" stroke="#3c3c3c" stroke-width="1.7"/><rect x="103.0" y="641.3" width="14" height="14" fill="#fff" stroke="#333" stroke-width="1"/><path d="M105.5,648.4 l3.2,3.4 l6,-7" fill="none" stroke="#222" stroke-width="1.25"/><g transform="translate(134.0,648.3)" fill="none" stroke="#8e8e8e" stroke-width="1.100"><rect x="-7.5" y="-1.5" width="9" height="9" stroke="#bdbdbd"/><rect x="-5" y="-4" width="10" height="10" fill="#fff" stroke="#a4a4a4"/><rect x="-2.5" y="-6.5" width="10" height="11" fill="#fff"/><path d="M.5,-9 v9.500 a2,2 0 0,0 4,0 v-7" stroke="#7a7a7a" stroke-width="1.300"/></g><rect x="128.0" y="665.3" width="14" height="14" fill="#fff" stroke="#333" stroke-width="1"/><path d="M130.5,672.4 l3.2,3.4 l6,-7" fill="none" stroke="#222" stroke-width="1.25"/><rect x="148.500" y="663.8" width="17" height="17" fill="#6d97c4" stroke="#4a78b0" stroke-width=".8"/><path d="M153,677.3 L160.500,666.3" stroke="#b9663a" stroke-width="3"/><path d="M152.300,679.3 l.4,-2.600 l1.800,1.200z" fill="#444"/><rect x="128.0" y="689.3" width="14" height="14" fill="#fff" stroke="#333" stroke-width="1"/><path d="M130.5,696.4 l3.2,3.4 l6,-7" fill="none" stroke="#222" stroke-width="1.25"/><path d="M148.500,696.3 h19" stroke="#3a86c8" stroke-width="3.400"/><path d="M58.7,715.3 l4.6,5 l-4.6,5" fill="none" stroke="#a6a6a6" stroke-width="1.5"/><rect x="78.0" y="713.3" width="14" height="14" fill="#fff" stroke="#333" stroke-width="1"/><path d="M80.5,720.4 l3.2,3.4 l6,-7" fill="none" stroke="#222" stroke-width="1.25"/><g transform="translate(109.0,720.3)" fill="none" stroke="#8e8e8e" stroke-width="1.100"><rect x="-7.5" y="-1.5" width="9" height="9" stroke="#bdbdbd"/><rect x="-5" y="-4" width="10" height="10" fill="#fff" stroke="#a4a4a4"/><rect x="-2.5" y="-6.5" width="10" height="11" fill="#fff"/><path d="M.5,-9 v9.500 a2,2 0 0,0 4,0 v-7" stroke="#7a7a7a" stroke-width="1.300"/></g><path d="M56.0,741.7 l5,4.8 l5,-4.8" fill="none" stroke="#3c3c3c" stroke-width="1.7"/><rect x="78.0" y="737.3" width="14" height="14" fill="#fff" stroke="#333" stroke-width="1"/><path d="M80.5,744.4 l3.2,3.4 l6,-7" fill="none" stroke="#222" stroke-width="1.25"/><g transform="translate(109.0,744.3)"><rect x="-8.0" y="-8.0" width="5.4" height="5.4" fill="#2d4f7c"/><rect x="-2.6" y="-8.0" width="5.4" height="5.4" fill="#c9d8ea"/><rect x="2.8" y="-8.0" width="5.4" height="5.4" fill="#2d4f7c"/><rect x="-8.0" y="-2.6" width="5.4" height="5.4" fill="#c9d8ea"/><rect x="-2.6" y="-2.6" width="5.4" height="5.4" fill="#2d4f7c"/><rect x="2.8" y="-2.6" width="5.4" height="5.4" fill="#c9d8ea"/><rect x="-8.0" y="2.8" width="5.4" height="5.4" fill="#6a8cb8"/><rect x="-2.6" y="2.8" width="5.4" height="5.4" fill="#c9d8ea"/><rect x="2.8" y="2.8" width="5.4" height="5.4" fill="#9db7d6"/></g></g><path d="M62,982 l-4.500,4.500 l4.500,4.500" fill="none" stroke="#333" stroke-width="1.900"/><path d="M456.500,982 l4.500,4.500 l-4.500,4.500" fill="none" stroke="#333" stroke-width="1.900"/><g clip-path="url(#bclip)"><path d="M1728.5,261.7 l5,4.8 l5,-4.8" fill="none" stroke="#3c3c3c" stroke-width="1.7"/><g transform="translate(1760.5,264.3)"><path d="M-8.5,8 V-7.5 h6.5 l1.5,2 H8.5 V8z" fill="#efefef" stroke="#8c8c8c" stroke-width="1"/><path d="M-8.5,-4 H8.5 V-2 H-8.5z" fill="#8c8c8c"/><path d="M-8.5,8 V-1 H8.5 V8z" fill="#f3f3f3" stroke="#8c8c8c" stroke-width="1"/></g><path d="M1756.7,283.3 l4.6,5 l-4.6,5" fill="none" stroke="#a6a6a6" stroke-width="1.5"/><g transform="translate(1785.5,288.3)"><path d="M-8.5,8 V-7.5 h6.5 l1.5,2.500 H8.5 V8z" fill="#f0f0f0" stroke="#9c9c9c" stroke-width="1"/><path d="M-8,8.600 H8.500" stroke="#c4c4c4" stroke-width="1.2"/></g><path d="M1756.7,307.3 l4.6,5 l-4.6,5" fill="none" stroke="#a6a6a6" stroke-width="1.5"/><g transform="translate(1785.5,312.3)"><path d="M-8.5,8 V-7.5 h6.5 l1.5,2.500 H8.5 V8z" fill="#f0f0f0" stroke="#9c9c9c" stroke-width="1"/><path d="M-8,8.600 H8.500" stroke="#c4c4c4" stroke-width="1.2"/></g><path d="M1756.7,331.3 l4.6,5 l-4.6,5" fill="none" stroke="#a6a6a6" stroke-width="1.5"/><g transform="translate(1785.5,336.3)"><path d="M-8.5,8 V-7.5 h6.5 l1.5,2.500 H8.5 V8z" fill="#f0f0f0" stroke="#9c9c9c" stroke-width="1"/><path d="M-8,8.600 H8.500" stroke="#c4c4c4" stroke-width="1.2"/></g><path d="M1756.7,355.3 l4.6,5 l-4.6,5" fill="none" stroke="#a6a6a6" stroke-width="1.5"/><g transform="translate(1785.5,360.3)"><path d="M-8.5,8 V-7.5 h6.5 l1.5,2.500 H8.5 V8z" fill="#f0f0f0" stroke="#9c9c9c" stroke-width="1"/><path d="M-8,8.600 H8.500" stroke="#c4c4c4" stroke-width="1.2"/></g><path d="M1754.0,381.7 l5,4.8 l5,-4.8" fill="none" stroke="#3c3c3c" stroke-width="1.7"/><g transform="translate(1785.5,384.3)"><path d="M-8.5,8 V-7.5 h6.5 l1.5,2 H8.5 V8z" fill="#efefef" stroke="#8c8c8c" stroke-width="1"/><path d="M-8.5,-4 H8.5 V-2 H-8.5z" fill="#8c8c8c"/><path d="M-8.5,8 V-1 H8.5 V8z" fill="#f3f3f3" stroke="#8c8c8c" stroke-width="1"/></g><path d="M1781.7,403.3 l4.6,5 l-4.6,5" fill="none" stroke="#a6a6a6" stroke-width="1.5"/><g transform="translate(1810.5,408.3)"><path d="M-8.5,8 V-7.5 h6.5 l1.5,2.500 H8.5 V8z" fill="#f0f0f0" stroke="#9c9c9c" stroke-width="1"/><path d="M-8,8.600 H8.500" stroke="#c4c4c4" stroke-width="1.2"/></g><path d="M1781.7,427.3 l4.6,5 l-4.6,5" fill="none" stroke="#a6a6a6" stroke-width="1.5"/><g transform="translate(1810.5,432.3)"><path d="M-8.5,8 V-7.5 h6.5 l1.5,2.500 H8.5 V8z" fill="#f0f0f0" stroke="#9c9c9c" stroke-width="1"/><path d="M-8,8.600 H8.500" stroke="#c4c4c4" stroke-width="1.2"/></g><path d="M1781.7,451.3 l4.6,5 l-4.6,5" fill="none" stroke="#a6a6a6" stroke-width="1.5"/><g transform="translate(1810.5,456.3)"><path d="M-8.5,8 V-7.5 h6.5 l1.5,2.500 H8.5 V8z" fill="#f0f0f0" stroke="#9c9c9c" stroke-width="1"/><path d="M-8,8.600 H8.500" stroke="#c4c4c4" stroke-width="1.2"/></g><path d="M1781.7,475.3 l4.6,5 l-4.6,5" fill="none" stroke="#a6a6a6" stroke-width="1.5"/><g transform="translate(1810.5,480.3)"><path d="M-8.5,8 V-7.5 h6.5 l1.5,2.500 H8.5 V8z" fill="#f0f0f0" stroke="#9c9c9c" stroke-width="1"/><path d="M-8,8.600 H8.500" stroke="#c4c4c4" stroke-width="1.2"/></g><path d="M1781.7,499.3 l4.6,5 l-4.6,5" fill="none" stroke="#a6a6a6" stroke-width="1.5"/><g transform="translate(1810.5,504.3)"><path d="M-8.5,8 V-7.5 h6.5 l1.5,2.500 H8.5 V8z" fill="#f0f0f0" stroke="#9c9c9c" stroke-width="1"/><path d="M-8,8.600 H8.500" stroke="#c4c4c4" stroke-width="1.2"/></g><path d="M1781.7,523.3 l4.6,5 l-4.6,5" fill="none" stroke="#a6a6a6" stroke-width="1.5"/><g transform="translate(1810.5,528.3)"><path d="M-8.5,8 V-7.5 h6.5 l1.5,2.500 H8.5 V8z" fill="#f0f0f0" stroke="#9c9c9c" stroke-width="1"/><path d="M-8,8.600 H8.500" stroke="#c4c4c4" stroke-width="1.2"/></g><path d="M1781.7,547.3 l4.6,5 l-4.6,5" fill="none" stroke="#a6a6a6" stroke-width="1.5"/><g transform="translate(1810.5,552.3)"><path d="M-8.5,8 V-7.5 h6.5 l1.5,2.500 H8.5 V8z" fill="#f0f0f0" stroke="#9c9c9c" stroke-width="1"/><path d="M-8,8.600 H8.500" stroke="#c4c4c4" stroke-width="1.2"/></g><path d="M1781.7,571.3 l4.6,5 l-4.6,5" fill="none" stroke="#a6a6a6" stroke-width="1.5"/><g transform="translate(1810.5,576.3)"><path d="M-8.5,8 V-7.5 h6.5 l1.5,2.500 H8.5 V8z" fill="#f0f0f0" stroke="#9c9c9c" stroke-width="1"/><path d="M-8,8.600 H8.500" stroke="#c4c4c4" stroke-width="1.2"/></g><path d="M1781.7,595.3 l4.6,5 l-4.6,5" fill="none" stroke="#a6a6a6" stroke-width="1.5"/><g transform="translate(1810.5,600.3)"><path d="M-8.5,8 V-7.5 h6.5 l1.5,2.500 H8.5 V8z" fill="#f0f0f0" stroke="#9c9c9c" stroke-width="1"/><path d="M-8,8.600 H8.500" stroke="#c4c4c4" stroke-width="1.2"/></g><path d="M1781.7,619.3 l4.6,5 l-4.6,5" fill="none" stroke="#a6a6a6" stroke-width="1.5"/><g transform="translate(1810.5,624.3)"><path d="M-8.5,8 V-7.5 h6.5 l1.5,2.500 H8.5 V8z" fill="#f0f0f0" stroke="#9c9c9c" stroke-width="1"/><path d="M-8,8.600 H8.500" stroke="#c4c4c4" stroke-width="1.2"/></g><path d="M1781.7,643.3 l4.6,5 l-4.6,5" fill="none" stroke="#a6a6a6" stroke-width="1.5"/><g transform="translate(1810.5,648.3)"><path d="M-8.5,8 V-7.5 h6.5 l1.5,2.500 H8.5 V8z" fill="#f0f0f0" stroke="#9c9c9c" stroke-width="1"/><path d="M-8,8.600 H8.500" stroke="#c4c4c4" stroke-width="1.2"/></g><path d="M1781.7,667.3 l4.6,5 l-4.6,5" fill="none" stroke="#a6a6a6" stroke-width="1.5"/><g transform="translate(1810.5,672.3)"><path d="M-8.5,8 V-7.5 h6.5 l1.5,2.500 H8.5 V8z" fill="#f0f0f0" stroke="#9c9c9c" stroke-width="1"/><path d="M-8,8.600 H8.500" stroke="#c4c4c4" stroke-width="1.2"/></g><path d="M1781.7,691.3 l4.6,5 l-4.6,5" fill="none" stroke="#a6a6a6" stroke-width="1.5"/><g transform="translate(1810.5,696.3)"><path d="M-8.5,8 V-7.5 h6.5 l1.5,2.500 H8.5 V8z" fill="#f0f0f0" stroke="#9c9c9c" stroke-width="1"/><path d="M-8,8.600 H8.500" stroke="#c4c4c4" stroke-width="1.2"/></g><path d="M1781.7,715.3 l4.6,5 l-4.6,5" fill="none" stroke="#a6a6a6" stroke-width="1.5"/><g transform="translate(1810.5,720.3)"><path d="M-8.5,8 V-7.5 h6.5 l1.5,2.500 H8.5 V8z" fill="#f0f0f0" stroke="#9c9c9c" stroke-width="1"/><path d="M-8,8.600 H8.500" stroke="#c4c4c4" stroke-width="1.2"/></g><path d="M1781.7,739.3 l4.6,5 l-4.6,5" fill="none" stroke="#a6a6a6" stroke-width="1.5"/><g transform="translate(1810.5,744.3)"><path d="M-8.5,8 V-7.5 h6.5 l1.5,2.500 H8.5 V8z" fill="#f0f0f0" stroke="#9c9c9c" stroke-width="1"/><path d="M-8,8.600 H8.500" stroke="#c4c4c4" stroke-width="1.2"/></g><path d="M1781.7,763.3 l4.6,5 l-4.6,5" fill="none" stroke="#a6a6a6" stroke-width="1.5"/><g transform="translate(1810.5,768.3)"><path d="M-8.5,8 V-7.5 h6.5 l1.5,2.500 H8.5 V8z" fill="#f0f0f0" stroke="#9c9c9c" stroke-width="1"/><path d="M-8,8.600 H8.500" stroke="#c4c4c4" stroke-width="1.2"/></g><path d="M1781.7,787.3 l4.6,5 l-4.6,5" fill="none" stroke="#a6a6a6" stroke-width="1.5"/><g transform="translate(1810.5,792.3)"><path d="M-8.5,8 V-7.5 h6.5 l1.5,2.500 H8.5 V8z" fill="#f0f0f0" stroke="#9c9c9c" stroke-width="1"/><path d="M-8,8.600 H8.500" stroke="#c4c4c4" stroke-width="1.2"/></g><path d="M1781.7,811.3 l4.6,5 l-4.6,5" fill="none" stroke="#a6a6a6" stroke-width="1.5"/><g transform="translate(1810.5,816.3)"><path d="M-8.5,8 V-7.5 h6.5 l1.5,2.500 H8.5 V8z" fill="#f0f0f0" stroke="#9c9c9c" stroke-width="1"/><path d="M-8,8.600 H8.500" stroke="#c4c4c4" stroke-width="1.2"/></g><path d="M1781.7,835.3 l4.6,5 l-4.6,5" fill="none" stroke="#a6a6a6" stroke-width="1.5"/><g transform="translate(1810.5,840.3)"><path d="M-8.5,8 V-7.5 h6.5 l1.5,2.500 H8.5 V8z" fill="#f0f0f0" stroke="#9c9c9c" stroke-width="1"/><path d="M-8,8.600 H8.500" stroke="#c4c4c4" stroke-width="1.2"/></g><path d="M1781.7,859.3 l4.6,5 l-4.6,5" fill="none" stroke="#a6a6a6" stroke-width="1.5"/><g transform="translate(1810.5,864.3)"><path d="M-8.5,8 V-7.5 h6.5 l1.5,2.500 H8.5 V8z" fill="#f0f0f0" stroke="#9c9c9c" stroke-width="1"/><path d="M-8,8.600 H8.500" stroke="#c4c4c4" stroke-width="1.2"/></g><path d="M1781.7,883.3 l4.6,5 l-4.6,5" fill="none" stroke="#a6a6a6" stroke-width="1.5"/><g transform="translate(1810.5,888.3)"><path d="M-8.5,8 V-7.5 h6.5 l1.5,2.500 H8.5 V8z" fill="#f0f0f0" stroke="#9c9c9c" stroke-width="1"/><path d="M-8,8.600 H8.500" stroke="#c4c4c4" stroke-width="1.2"/></g><path d="M1781.7,907.3 l4.6,5 l-4.6,5" fill="none" stroke="#a6a6a6" stroke-width="1.5"/><g transform="translate(1810.5,912.3)"><path d="M-8.5,8 V-7.5 h6.5 l1.5,2.500 H8.5 V8z" fill="#f0f0f0" stroke="#9c9c9c" stroke-width="1"/><path d="M-8,8.600 H8.500" stroke="#c4c4c4" stroke-width="1.2"/></g><path d="M1781.7,931.3 l4.6,5 l-4.6,5" fill="none" stroke="#a6a6a6" stroke-width="1.5"/><g transform="translate(1810.5,936.3)"><path d="M-8.5,8 V-7.5 h6.5 l1.5,2.500 H8.5 V8z" fill="#f0f0f0" stroke="#9c9c9c" stroke-width="1"/><path d="M-8,8.600 H8.500" stroke="#c4c4c4" stroke-width="1.2"/></g><path d="M1781.7,955.3 l4.6,5 l-4.6,5" fill="none" stroke="#a6a6a6" stroke-width="1.5"/><g transform="translate(1810.5,960.3)"><path d="M-8.5,8 V-7.5 h6.5 l1.5,2.500 H8.5 V8z" fill="#f0f0f0" stroke="#9c9c9c" stroke-width="1"/><path d="M-8,8.600 H8.500" stroke="#c4c4c4" stroke-width="1.2"/></g><path d="M1781.7,979.3 l4.6,5 l-4.6,5" fill="none" stroke="#a6a6a6" stroke-width="1.5"/><g transform="translate(1810.5,984.3)"><path d="M-8.5,8 V-7.5 h6.5 l1.5,2.500 H8.5 V8z" fill="#f0f0f0" stroke="#9c9c9c" stroke-width="1"/><path d="M-8,8.600 H8.500" stroke="#c4c4c4" stroke-width="1.2"/></g></g><path d="M1901.500,267.500 l5,-5 l5,5" fill="none" stroke="#444" stroke-width="1.800"/><path d="M1901.500,963 l5,5 l5,-5" fill="none" stroke="#444" stroke-width="1.800"/><path d="M1685,982 l-4.500,4.500 l4.500,4.500" fill="none" stroke="#333" stroke-width="1.900"/><path d="M1881,982 l4.500,4.500 l-4.500,4.500" fill="none" stroke="#333" stroke-width="1.900"/>
<circle cx="16" cy="1013.500" r="4.300" fill="none" stroke="#9a9a9a" stroke-width="1.300"/><path d="M19,1017 l4,4.500" stroke="#9a9a9a" stroke-width="1.500"/><g transform="translate(1131.0,1015.0)"><ellipse cx="-1" cy="-1" rx="5.500" ry="8" transform="rotate(-25)" fill="#e9e9e9" stroke="#111" stroke-width="1.500"/><path d="M-5,-7 L0,2" stroke="#111" stroke-width="1.400"/><circle cx="3" cy="6" r="2.800" fill="#fff" stroke="#111" stroke-width="1.300"/><path d="M4,-8 l5,-3 M6,-4 l3,-1" stroke="#444" stroke-width=".8" stroke-dasharray="1,1"/></g><path d="M1276,1011.500 l5.500,5.500 l5.500,-5.500" fill="none" stroke="#444" stroke-width="1.200"/><g transform="translate(1316.0,1016.0)"><path d="M-4,-2 v-3.500 a4,4.300 0 0,1 8,0 v3.500" fill="none" stroke="#8a8a8a" stroke-width="2.200"/><rect x="-7" y="-2" width="14" height="10.500" rx="1.200" fill="#7d7d7d"/></g><path d="M1489.5,1011.500 h7 l-3.500,-4.500z M1489.5,1018.500 h7 l-3.500,4.500z" fill="#222"/><path d="M1486.0,1005.500 v19" stroke="#d0d0d0" stroke-width="1"/><path d="M1641.0,1011.500 h7 l-3.500,-4.500z M1641.0,1018.500 h7 l-3.500,4.500z" fill="#222"/><path d="M1637.5,1005.500 v19" stroke="#d0d0d0" stroke-width="1"/><rect x="1660.0" y="1008.0" width="14" height="14" fill="#fff" stroke="#333" stroke-width="1"/><path d="M1662.5,1015.1 l3.2,3.4 l6,-7" fill="none" stroke="#222" stroke-width="1.25"/><g transform="translate(1759.5,1015.0)"><ellipse rx="8.500" ry="7.500" fill="none" stroke="#555" stroke-width="1"/><ellipse rx="3.800" ry="7.500" fill="none" stroke="#555" stroke-width=".9"/><path d="M-8.500,0 h17 M-7.500,-3.800 h15 M-7.500,3.800 h15 M0,-7.500 v15" stroke="#555" stroke-width=".9"/><path d="M-11,2 h4 M7,2 h4" stroke="#555" stroke-width="1.200"/></g><g transform="translate(1870.5,1015.0)"><path d="M-10,-3 C-10,-9 10,-9 10,-3 C10,3 2,3.500 -1,3 L-6,8 L-5,2 C-8,1 -10,-1 -10,-3z" fill="#4a4a4a"/><circle cx="-5" cy="-3" r="1.400" fill="#eee"/><circle cx="0" cy="-3" r="1.400" fill="#eee"/><circle cx="5" cy="-3" r="1.400" fill="#eee"/></g><g transform="translate(1905.0,1016.0)"><path d="M-9,-3 h4 a2.500,2.500 0 1,1 5,0 h5 v4 a2.500,2.500 0 1,0 0,5 v4 h-14z" fill="#c9d3c9" stroke="#6a766a" stroke-width="1"/><path d="M4,-9 l6,2 l-2,5" fill="none" stroke="#6a766a" stroke-width="1.200"/></g>
</svg>
<div class="abs" style="left:868px;top:129px;width:262px;height:107px;background:#fff;border:1px solid #767676;box-shadow:3px 3px 4px rgba(0,0,0,.45);color:#575757;font-size:15px"><div class="abs b" style="left:5px;top:4px;white-space:nowrap;letter-spacing:-.11px">Dreht eine Beschriftung.</div><div class="abs" style="left:5px;top:35px;white-space:nowrap;letter-spacing:-.1px">Gedrückthalten von Strg beim Drehen</div><div class="abs" style="left:5px;top:55px;white-space:nowrap;letter-spacing:-.1px">erhöht um 15°.</div><div class="abs" style="left:5px;top:87px;white-space:nowrap;letter-spacing:-.14px">Funktioniert auf allen Layern.</div></div>
<div class="abs" style="left:861px;top:923px;width:137px;height:45px;background:#ffff00;border:2px solid #000"><span class="abs" style="left:33.600px;top:9.500px;font-weight:bold;font-size:20px;line-height:23px;letter-spacing:-.67px;white-space:nowrap">Bild 21</span></div>
<svg class="abs" style="left:0;top:0" width="1918" height="1030" viewBox="0 0 1918 1030"><circle cx="864.6" cy="105.2" r="27.3" fill="none" stroke="#f20d14" stroke-width="3.6"/><path d="M855.5,133 L842.9,191 C836,212 829,228 825.4,239.5 C819,258 816,270 815.8,285 C815.8,305 822,318 836.500,326.800" fill="none" stroke="#f20d14" stroke-width="3"/><path d="M854.6,336.9 L834.5,320.3 L836,327 L828.8,332.5 Z" fill="#f20d14"/></svg>
</body></html>
